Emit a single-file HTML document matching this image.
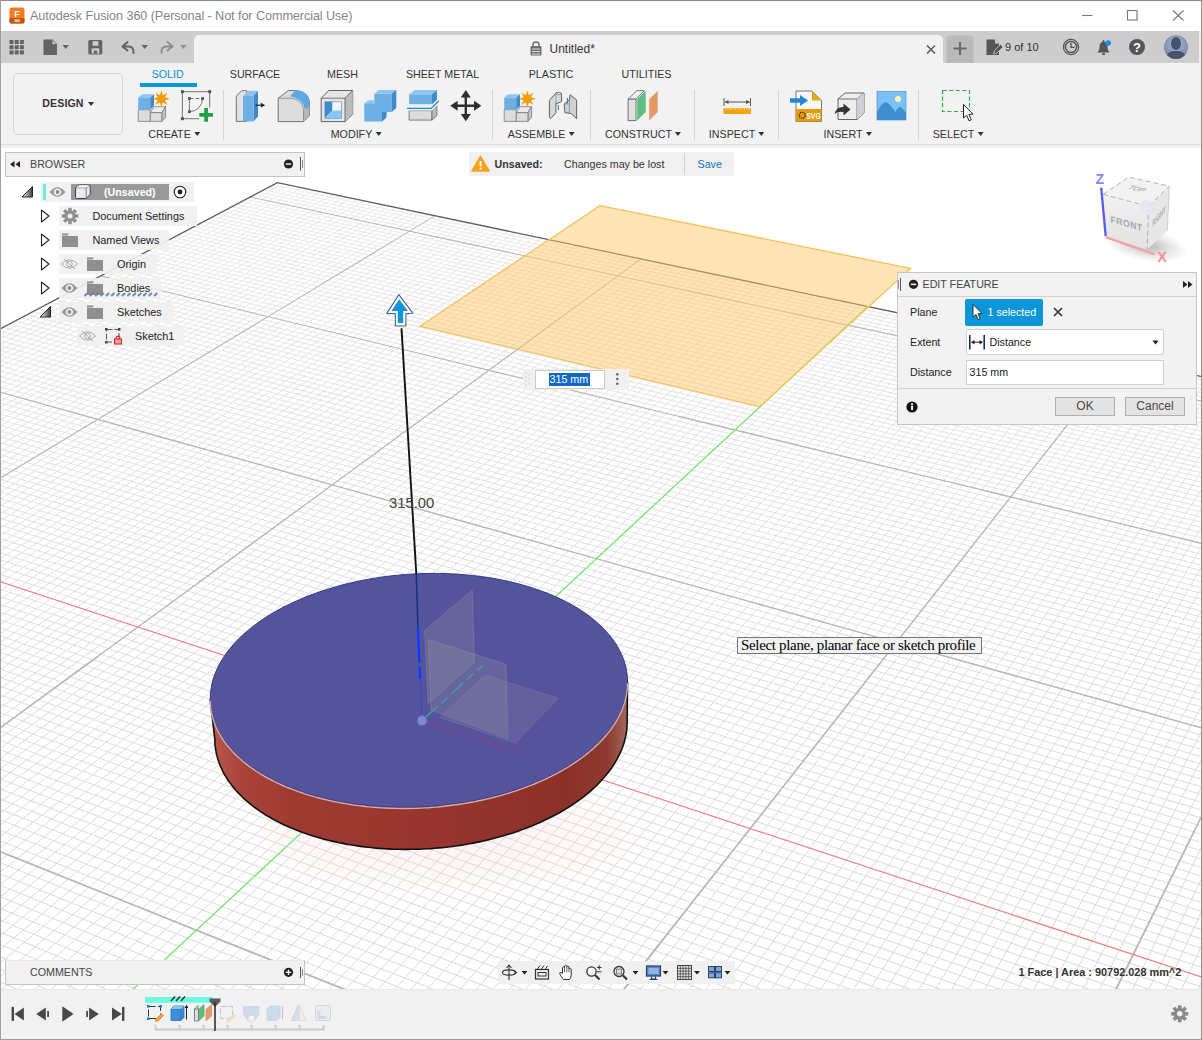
<!DOCTYPE html>
<html><head><meta charset="utf-8"><title>Autodesk Fusion 360</title>
<style>
*{box-sizing:border-box;margin:0;padding:0}
html,body{width:1202px;height:1040px;overflow:hidden;background:#fff}
body{font-family:"Liberation Sans",sans-serif;font-size:12px;color:#333;position:relative}
.abs{position:absolute}
#titlebar{left:0;top:0;width:1202px;height:31px;background:#fff;border-top:1px solid #8a8a8a}
#title{left:30px;top:8.6px;font-size:12.7px;color:#858585;letter-spacing:-0.1px;white-space:nowrap}
#qat{left:0;top:31px;width:1202px;height:32px;background:#cdcdcd;border-right:3px solid #f0f0f0}
#doctab{left:194px;top:35px;width:748.5px;height:28px;background:#f2f2f2;border-radius:5px 5px 0 0}
#ribbon{left:0;top:63px;width:1202px;height:85px;background:#f2f2f2}
.tab{position:absolute;top:67.5px;font-size:10.7px;color:#333;white-space:nowrap;transform:translateX(-50%)}
.glabel{position:absolute;top:127.5px;font-size:10.7px;color:#333;white-space:nowrap;transform:translateX(-50%)}
.glabel:after{content:"";display:inline-block;margin-left:3px;border:3.5px solid transparent;border-top:4px solid #333;border-bottom:0;vertical-align:2px}
.vsep{position:absolute;top:90px;width:1px;height:50px;background:#d4d4d4}
#canvas{left:0;top:148px;width:1202px;height:841px;background:#fff;overflow:hidden}
#bottombar{left:0;top:989px;width:1202px;height:51px;background:#f1f1f1;border-top:1px solid #e8e8e8}
.lb{left:0;top:0;width:1px;height:1040px;background:#a0a0a0}
.rb{left:1201px;top:0;width:1px;height:1040px;background:#909090}
.bb{left:0;top:1038.7px;width:1202px;height:1.3px;background:#9c9c9c}
.panelhdr{background:#f1f1f1;border:1px solid #c4c4c4;color:#444;font-size:12px}
.row{position:absolute;height:22px;background:rgba(240,240,240,.92);font-size:10.9px;color:#222;white-space:nowrap}
.row span{position:absolute;top:4px}
</style></head><body>
<div id="titlebar" class="abs"></div>
<div id="title" class="abs">Autodesk Fusion 360 (Personal - Not for Commercial Use)</div>
<svg class="abs" style="left:9px;top:7px" width="16" height="17" viewBox="0 0 16 17"><rect x="0.5" y="0.5" width="15" height="16" rx="2.5" fill="#f47c20"/><rect x="0.5" y="11" width="15" height="5.5" rx="1.5" fill="#c4520c"/><text x="8" y="9.5" font-family="Liberation Sans, sans-serif" font-weight="bold" font-size="9" fill="#fff" text-anchor="middle">F</text><text x="8" y="15.3" font-family="Liberation Sans, sans-serif" font-weight="bold" font-size="3.6" fill="#fff" text-anchor="middle">360</text></svg>
<svg class="abs" style="left:1075px;top:5px" width="120" height="22" viewBox="1075 5 120 22" fill="none" stroke="#777" stroke-width="1.1"><path d="M1082 15.5H1092.5"/><rect x="1127.5" y="10.5" width="9.5" height="9.5"/><path d="M1173 10.5L1183.5 20.5M1183.5 10.5L1173 20.5"/></svg>

<div id="qat" class="abs"></div>
<div id="doctab" class="abs"></div>
<svg class="abs" style="left:0;top:31px" width="1202" height="32" viewBox="0 31 1202 32">
<!-- grid icon -->
<g fill="#636363"><rect x="9.5" y="40" width="4" height="4"/><rect x="14.7" y="40" width="4" height="4"/><rect x="19.9" y="40" width="4" height="4"/><rect x="9.5" y="45.2" width="4" height="4"/><rect x="14.7" y="45.2" width="4" height="4"/><rect x="19.9" y="45.2" width="4" height="4"/><rect x="9.5" y="50.4" width="4" height="4"/><rect x="14.7" y="50.4" width="4" height="4"/><rect x="19.9" y="50.4" width="4" height="4"/></g>
<!-- file -->
<path d="M43.5 39.5H52L57 44.5V55H43.5Z" fill="#636363"/><path d="M52 39.5V44.5H57Z" fill="#cdcdcd" stroke="#636363" stroke-width=".8"/>
<path d="M62.5 45L69 45L65.7 49Z" fill="#636363"/>
<!-- save -->
<rect x="88.3" y="40" width="14" height="14.6" rx="1.6" fill="#636363"/><rect x="92.5" y="41.2" width="5.9" height="4.6" fill="#cdcdcd"/><rect x="91.6" y="48.3" width="7.7" height="5.2" fill="#cdcdcd"/><rect x="93.8" y="50.6" width="3.3" height="2.9" fill="#636363"/>
<!-- undo -->
<path d="M122.5 46.5L127.5 42M122.5 46.5L127.5 50.5M122.5 46.5H129Q134 46.8 133.5 53" fill="none" stroke="#636363" stroke-width="2" stroke-linecap="round" stroke-linejoin="round"/>
<path d="M141.5 45L148 45L144.7 49Z" fill="#636363"/>
<!-- redo -->
<path d="M172.5 46.5L167.5 42M172.5 46.5L167.5 50.5M172.5 46.5H166Q161 46.8 161.5 53" fill="none" stroke="#8e8e8e" stroke-width="1.8" stroke-linecap="round" stroke-linejoin="round"/>
<path d="M180 45L186.5 45L183.2 49Z" fill="#8e8e8e"/>
<!-- lock -->
<path d="M533 46V44.5Q533 42 536 42Q539 42 539 44.5V46" fill="none" stroke="#707070" stroke-width="1.5"/><rect x="530.5" y="46" width="11" height="9.5" rx="1" fill="#707070"/><path d="M532 49H540M532 51.5H540M532 54H540" stroke="#f2f2f2" stroke-width=".8"/>
<text x="549.5" y="53" font-family="Liberation Sans, sans-serif" font-size="12" fill="#333">Untitled*</text>
<path d="M927 45.5L935 53.5M935 45.5L927 53.5" stroke="#555" stroke-width="1.5"/>
<!-- plus -->
<path d="M946.5 63V39Q946.5 35.5 950 35.5H970Q973.5 35.5 973.5 39V63Z" fill="#bababa"/>
<path d="M953.5 48.5H966.5M960 42V55" stroke="#6a6a6a" stroke-width="2.2"/>
<!-- job status -->
<path d="M986.5 39.5H995L999 43.5V55H986.5Z" fill="#555"/><path d="M995 39.5V43.5H999Z" fill="#cdcdcd"/><path d="M993.5 54L994.5 50.5L1000.5 44.5L1003 47L997 53Z" fill="#555" stroke="#cdcdcd" stroke-width=".8"/>
<text x="1005" y="51" font-family="Liberation Sans, sans-serif" font-size="11" fill="#333">9 of 10</text>
<!-- clock -->
<circle cx="1071" cy="47" r="7.6" fill="none" stroke="#555" stroke-width="1.2"/><circle cx="1071" cy="47" r="5.6" fill="none" stroke="#555" stroke-width="1.5"/><path d="M1071 43V47.3H1074.5" fill="none" stroke="#555" stroke-width="1.3"/>
<!-- bell -->
<path d="M1097.5 52.5Q1099.5 51 1099.5 47Q1099.5 42 1103.5 41.5Q1107.5 42 1107.5 47Q1107.5 51 1109.5 52.5Z" fill="#555"/><rect x="1102.3" y="53.2" width="2.6" height="1.8" fill="#555"/><circle cx="1103.5" cy="41" r="1" fill="#555"/>
<circle cx="1108.2" cy="43" r="2.8" fill="#1a8fe3"/>
<!-- help -->
<circle cx="1137" cy="47" r="8" fill="#555"/><text x="1137" y="51.8" font-family="Liberation Sans, sans-serif" font-size="13" font-weight="bold" fill="#fff" text-anchor="middle">?</text>
<!-- avatar -->
<defs><radialGradient id="av" cx=".5" cy=".35" r=".7"><stop offset="0" stop-color="#a9b8cf"/><stop offset="1" stop-color="#6f84a6"/></radialGradient><clipPath id="avc"><circle cx="1176" cy="47" r="12"/></clipPath></defs>
<circle cx="1176" cy="47" r="12" fill="url(#av)"/>
<g clip-path="url(#avc)" fill="#46536b"><ellipse cx="1176" cy="43.5" rx="5" ry="6.5"/><path d="M1165 60Q1166 52 1173 51H1179Q1186 52 1187 60Z"/></g>
</svg>

<div id="ribbon" class="abs"></div>
<div class="abs" style="left:0;top:144px;width:1202px;height:1px;background:#e0e0e0"></div>
<div class="abs" style="left:13px;top:73px;width:110px;height:62px;border:1px solid #d6d6d6;border-radius:5px;background:#f3f3f3"></div>
<div class="abs" style="left:42.3px;top:97px;font-size:10.6px;font-weight:bold;color:#333;letter-spacing:.1px">DESIGN</div>
<div class="abs" style="left:88px;top:102px;border:3.5px solid transparent;border-top:4px solid #333;border-bottom:0"></div>
<div class="tab" style="left:167.7px;color:#0c8fd3">SOLID</div>
<div class="abs" style="left:139.5px;top:83.2px;width:57px;height:3.6px;background:#0c96d8"></div>
<div class="tab" style="left:255px">SURFACE</div>
<div class="tab" style="left:342.5px">MESH</div>
<div class="tab" style="left:442.5px">SHEET METAL</div>
<div class="tab" style="left:551px">PLASTIC</div>
<div class="tab" style="left:646.5px">UTILITIES</div>
<div class="glabel" style="left:174px">CREATE</div>
<div class="glabel" style="left:356px">MODIFY</div>
<div class="glabel" style="left:541px">ASSEMBLE</div>
<div class="glabel" style="left:643px">CONSTRUCT</div>
<div class="glabel" style="left:736.5px">INSPECT</div>
<div class="glabel" style="left:847.5px">INSERT</div>
<div class="glabel" style="left:958px">SELECT</div>
<div class="vsep" style="left:222.5px"></div><div class="vsep" style="left:491.5px"></div><div class="vsep" style="left:589.5px"></div><div class="vsep" style="left:694px"></div><div class="vsep" style="left:777.7px"></div><div class="vsep" style="left:918px"></div>
<svg class="abs" style="left:130px;top:86px" width="860" height="40" viewBox="130 86 860 40">
<defs>
<linearGradient id="gb" x1="0" y1="0" x2="0" y2="1"><stop offset="0" stop-color="#7fbbe9"/><stop offset="1" stop-color="#4a94d6"/></linearGradient>
<linearGradient id="gg" x1="0" y1="0" x2="0" y2="1"><stop offset="0" stop-color="#ececec"/><stop offset="1" stop-color="#cfcfcf"/></linearGradient>
</defs>
<!-- new component (CREATE) -->
<g id="newc" stroke-linejoin="round">
<path d="M150.2 112.7H161.9L165.6 106.7H154Z" fill="#ececec" stroke="#7a7a7a" stroke-width=".8"/>
<path d="M161.900 112.700L165.600 106.700V117.200L161.900 121.400Z" fill="#c4c4c4" stroke="#7a7a7a" stroke-width=".8"/>
<path d="M150.200 112.700H161.900V121.400H150.200Z" fill="#dedede" stroke="#7a7a7a" stroke-width=".8"/>
<path d="M138.200 109.700H150.200V121.400H138.200Z" fill="#dcdcdc" stroke="#7a7a7a" stroke-width=".8"/>
<path d="M138.200 97.700H150.200L154 94.300H142Z" fill="#8cc6f0"/>
<path d="M150.200 97.700L154 94.300V106L150.200 109.700Z" fill="#3f8acd"/>
<path d="M138.200 97.700H150.200V109.700H138.200Z" fill="#6cb0e6"/>
<path d="M161.4 90.3L162.9 95.200L167.400 92.800L165 97.300L169.900 98.800L165 100.300L167.400 104.800L162.900 102.400L161.400 107.300L159.900 102.400L155.400 104.800L157.800 100.300L152.900 98.800L157.800 97.300L155.400 92.800L159.900 95.200Z" fill="#f59b0a"/>
</g>
<!-- create sketch -->
<path d="M182.400 118.700V91.700H209.700V107.500M182.400 118.700H199" fill="none" stroke="#666" stroke-width=".9"/>
<g fill="#555"><rect x="180.900" y="90.200" width="3" height="3"/><rect x="208.200" y="90.200" width="3" height="3"/><rect x="180.900" y="117.200" width="3" height="3"/></g>
<path d="M189.400 98.500H202.600" stroke="#666" stroke-width=".9" stroke-dasharray="4 2"/>
<path d="M189.400 98.500V111.700" stroke="#666" stroke-width=".9"/>
<path d="M189.400 111.700A13.200 13.200 0 0 0 202.600 98.500" fill="none" stroke="#666" stroke-width=".9"/>
<g fill="#555"><rect x="188" y="97.100" width="2.800" height="2.800"/><rect x="201.200" y="97.100" width="2.800" height="2.800"/><rect x="188" y="110.300" width="2.800" height="2.800"/></g>
<path d="M199.300 113.050H204.250V108.100H207.950V113.050H212.900V116.750H207.950V121.700H204.250V116.750H199.300Z" fill="#1fa045"/>
<!-- press pull -->
<path d="M236.300 96.200L241.600 90.700H246.800V121.400H236.300Z" fill="#e2e2e2" stroke="#666" stroke-width=".9" stroke-linejoin="round"/>
<path d="M243 95.800H253.500L258 90.700H248.300Z" fill="#8cc6f0"/>
<path d="M253.500 95.800L258 90.700V116.400L253.500 121.400Z" fill="#3f8acd"/>
<path d="M243 95.800H253.500V121.400H243Z" fill="#6cb0e6"/>
<path d="M255.500 105.200H262" stroke="#222" stroke-width="1.2"/><path d="M260.800 102.800L265.200 105.200L260.800 107.600Z" fill="#222"/>
<!-- fillet -->
<path d="M278.200 98.200L288.300 90.500H295.600Q308 91.500 309.400 101.500V116.100L303.500 121.600H278.200Z" fill="#dcdcdc" stroke="#666" stroke-width=".9" stroke-linejoin="round"/>
<path d="M303.500 109.700L309.400 105.100V116.100L303.500 121.600Z" fill="#b5b5b5"/>
<path d="M295.600 90.100Q308.500 91.500 309.400 101.500V106.600L304.800 109.500Q303 98.500 290.100 96.300Z" fill="#5fa8e2"/>
<path d="M278.200 98.200H291Q302.500 99.500 303.500 109.700V121.600" fill="none" stroke="#777" stroke-width=".7"/>
<!-- shell -->
<path d="M321.200 98.200L328.900 90.500H352.700V114.300L345 121.600H321.200Z" fill="#e6e6e6" stroke="#555" stroke-width=".9" stroke-linejoin="round"/>
<path d="M345 98.200L352.700 90.500V114.300L345 121.600Z" fill="#bcbcbc"/>
<path d="M321.200 98.200H345V121.600M345 98.200L352.700 90.500" fill="none" stroke="#555" stroke-width=".8"/>
<rect x="324.900" y="101.800" width="16.500" height="16.500" fill="#f2f2f2"/>
<path d="M324.900 101.800H332.200V110.600L324.900 118.300Z" fill="#3f8acd"/>
<path d="M332.200 110.600H341.400V118.300H324.900Z" fill="#8cc6f0"/>
<rect x="324.900" y="101.800" width="16.500" height="16.500" fill="none" stroke="#4a8cc8" stroke-width=".6"/>
<!-- combine -->
<path d="M364.300 103.300H374.300V93.800H391.700V112.100H382V121.600H364.300Z" fill="#6cb0e6"/>
<path d="M374.300 93.800L378.900 90.100H396.300L391.700 93.800Z M364.300 103.300L368.800 100.200H374.300V103.300Z" fill="#8cc6f0"/>
<path d="M391.700 93.800L396.300 90.100V107.900L391.700 112.100Z M382 112.100H386.800L386.200 117.900L382 121.600Z" fill="#3f8acd"/>
<!-- offset face -->
<path d="M409.100 94.500L414.600 90.100H436.900L432 94.500Z" fill="#8cc6f0"/>
<path d="M432 94.500L436.900 90.100V100L432 104.200Z" fill="#3f8acd"/>
<path d="M409.100 94.500H432V104.200H409.100Z" fill="#6cb0e6"/>
<path d="M409.100 110.600H432V120.100H409.100Z" fill="#dcdcdc" stroke="#666" stroke-width=".8"/>
<path d="M432 110.600L436.900 105.500V115.700L432 120.100Z" fill="#bcbcbc" stroke="#666" stroke-width=".8" stroke-linejoin="round"/>
<path d="M406.900 108.400H431.100L438.800 101.100" fill="none" stroke="#f2f2f2" stroke-width="4"/>
<path d="M406.900 108.400H431.100L438.800 101.100" fill="none" stroke="#1f86da" stroke-width="1.4"/>
<!-- move -->
<path d="M465.800 90.100L470.800 97.500H467V104.500H474V100.700L481.400 105.700L474 110.700V106.900H467V113.900H470.800L465.800 121.300L460.800 113.900H464.600V106.900H457.600V110.700L450.200 105.700L457.600 100.700V104.500H464.600V97.500H460.800Z" fill="#2e2e2e"/>
<!-- assemble new component -->
<use href="#newc" x="366" y="0"/>
<!-- joint -->
<path d="M549.400 100.500L555 94Q556 92.300 558.800 92.300Q561.600 92.300 561.600 94.500V101.500L555.900 104V112.700L550.600 118.700L549.400 117.200Z" fill="#d6d6d6" stroke="#555" stroke-width=".9" stroke-linejoin="round"/>
<path d="M555.900 104V94.500Q558.500 92.800 561.600 94.500" fill="none" stroke="#777" stroke-width=".6"/>
<ellipse cx="558.800" cy="93.600" rx="2" ry="1" fill="#f4f4f4" stroke="#666" stroke-width=".5"/>
<path d="M564.100 104L569.400 100L570.100 94.700L576.600 100V118.700L570.900 113.500L564.900 112.700Z" fill="#d0d0d0" stroke="#555" stroke-width=".9" stroke-linejoin="round"/>
<path d="M564.100 104H569.400V113.200M569.400 100V104" fill="none" stroke="#777" stroke-width=".6"/>
<path d="M558.400 105V110M567.400 98V103.800" stroke="#1f86da" stroke-width="1.1"/>
<!-- construct -->
<path d="M628.100 99.200L636.700 90.700H644.200L636 99.200Z" fill="#f0f0f0" stroke="#555" stroke-width=".8" stroke-linejoin="round"/>
<path d="M628.100 99.200H636V120.600H628.100Z" fill="#e0e0e0" stroke="#555" stroke-width=".8" stroke-linejoin="round"/>
<path d="M637.200 99.200L645.700 90.700V112L637.200 120.600Z" fill="#5cc080"/>
<path d="M649.200 99.200L657.700 90.700V112L649.200 120.600Z" fill="#e59a66"/>
<!-- inspect -->
<rect x="723.5" y="108" width="27.5" height="6" fill="#f2a511"/>
<path d="M726 108V110M728.3 108V109.3M730.6 108V110M732.9 108V109.3M735.2 108V110M737.5 108V109.3M739.8 108V110M742.1 108V109.3M744.4 108V110M746.7 108V109.3M749 108V110" stroke="#fff" stroke-width=".6"/>
<path d="M724 98V106M750.5 98V106M725 102H749.5" stroke="#555" stroke-width="1"/><path d="M724.5 102L728.5 100V104ZM750 102L746 100V104Z" fill="#555"/>
<!-- insert svg -->
<path d="M796 91H812L821.5 100.5V121.5H796Z" fill="#f8f8f8" stroke="#666" stroke-width=".9"/>
<path d="M812 91L821.5 100.5H812Z" fill="#f2a511"/>
<rect x="796" y="109" width="25.5" height="12.5" fill="#e79c10"/>
<circle cx="802.3" cy="115.3" r="3" fill="none" stroke="#3b2a00" stroke-width="1.3" stroke-dasharray="1.4 .9"/>
<text x="806.3" y="119.3" font-family="Liberation Sans, sans-serif" font-size="8.6" font-weight="bold" fill="#fff" textLength="14.4" lengthAdjust="spacingAndGlyphs">SVG</text>
<path d="M790 98.3H800V95L808 100.5L800 106V102.7H790Z" fill="#1f86da"/>
<!-- insert derive -->
<path d="M838 99L845 93H864V113L857 119.5H838Z" fill="#ededed" stroke="#555" stroke-width=".9"/>
<path d="M838 99H857V119.5M857 99L864 93" fill="none" stroke="#555" stroke-width=".8"/>
<path d="M857 99L864 93V113L857 119.5Z" fill="#cfcfd4"/>
<path d="M834.5 114Q836.5 106.5 843.5 107V103.5L850.5 109.5L843.5 115.5V112Q838 111 834.5 114Z" fill="#333"/>
<!-- image -->
<rect x="877" y="91.5" width="29" height="28.5" fill="#7cc0f4" stroke="#3f86c6" stroke-width=".6"/>
<path d="M877 112Q884 98 889 104Q893 108 895.5 112Q899 105 902 108Q904 110 906 113V120H877Z" fill="#3f8ecf"/>
<circle cx="898" cy="99" r="3" fill="#fbf5b8"/>
<!-- select -->
<rect x="942.5" y="90.5" width="27" height="21" fill="none" stroke="#2fb14a" stroke-width="1.2" stroke-dasharray="4.2 2.4"/>
<path d="M963.5 104.5V118L966.7 115.2L969 120.8L971.2 119.8L968.9 114.4L973 114.2Z" fill="#fff" stroke="#222" stroke-width="1" stroke-linejoin="round"/>
</svg>

<div id="canvas" class="abs">
<svg id="scene" width="1202" height="841" viewBox="0 148 1202 841" style="display:block">
<defs>
<linearGradient id="sideg" x1="210" y1="0" x2="628" y2="0" gradientUnits="userSpaceOnUse">
<stop offset="0" stop-color="#bb5a4d"/><stop offset="0.07" stop-color="#a9443a"/><stop offset="0.2" stop-color="#9e3a32"/><stop offset="0.55" stop-color="#96352d"/><stop offset="0.85" stop-color="#8b3028"/><stop offset="0.95" stop-color="#8e3a31"/><stop offset="1" stop-color="#a0695d"/>
</linearGradient>
<radialGradient id="shad"><stop offset="0" stop-color="#f3bcbc" stop-opacity=".2"/><stop offset=".7" stop-color="#f6caca" stop-opacity=".13"/><stop offset="1" stop-color="#f8d8d8" stop-opacity="0"/></radialGradient>
</defs>
<path d="M-160.8 976.0 L-4.8 852.2 M-150.5 980.7 L5.2 856.2 M-140.1 985.3 L15.2 860.2 M-129.6 990.1 L25.3 864.3 M-119.0 994.8 L35.5 868.3 M-108.4 999.6 L45.7 872.4 M-97.8 1004.4 L56.0 876.5 M-87.1 1009.2 L66.3 880.7 M-76.3 1014.1 L76.7 884.8 M-65.4 1019.0 L87.1 889.0 M-54.5 1023.9 L97.6 893.2 M-43.6 1028.9 L108.1 897.4 M-32.5 1033.8 L118.7 901.6 M-21.4 1038.8 L129.4 905.9 M-10.3 1043.9 L140.1 910.2 M1.0 1048.9 L150.9 914.5 M12.2 1054.0 L161.7 918.8 M23.6 1059.2 L172.6 923.2 M35.0 1064.3 L183.5 927.6 M58.1 1074.7 L205.6 936.4 M69.7 1080.0 L216.8 940.9 M81.4 1085.2 L227.9 945.4 M93.2 1090.5 L239.2 949.9 M105.1 1095.9 L250.5 954.4 M117.0 1101.3 L261.9 958.9 M261.9 958.9 L385.6 837.5 M129.0 1106.7 L273.3 963.5 M273.3 963.5 L396.5 841.4 M141.0 1112.1 L284.9 968.1 M284.9 968.1 L407.5 845.4 M153.2 1117.6 L296.4 972.8 M296.4 972.8 L418.5 849.3 M165.4 1123.1 L308.1 977.4 M308.1 977.4 L429.6 853.3 M177.7 1128.6 L319.8 982.1 M319.8 982.1 L440.8 857.3 M190.0 1134.2 L331.5 986.8 M331.5 986.8 L452.0 861.4 M202.5 1139.8 L343.4 991.6 M343.4 991.6 L463.3 865.4 M355.3 996.3 L474.6 869.5 M367.3 1001.1 L486.0 873.6 M379.3 1005.9 L497.5 877.7 M391.4 1010.8 L509.0 881.8 M403.6 1015.7 L520.5 886.0 M415.9 1020.6 L532.2 890.2 M428.2 1025.5 L543.9 894.4 M440.6 1030.5 L555.6 898.6 M453.0 1035.4 L567.5 902.9 M465.6 1040.5 L579.4 907.2 M478.2 1045.5 L591.3 911.5 M490.9 1050.6 L603.3 915.8 M503.7 1055.7 L615.4 920.1 M516.5 1060.8 L627.6 924.5 M529.4 1066.0 L639.8 928.9 M542.4 1071.2 L652.1 933.3 M568.6 1081.7 L676.9 942.2 M581.9 1087.0 L689.3 946.7 M595.2 1092.3 L701.9 951.2 M608.6 1097.7 L714.5 955.8 M714.5 955.8 L805.0 834.6 M622.0 1103.1 L727.2 960.3 M727.2 960.3 L817.0 838.6 M635.6 1108.5 L740.0 964.9 M740.0 964.9 L829.1 842.5 M649.2 1114.0 L752.8 969.6 M752.8 969.6 L841.2 846.5 M662.9 1119.4 L765.8 974.2 M765.8 974.2 L853.4 850.4 M676.7 1125.0 L778.7 978.9 M778.7 978.9 L865.6 854.4 M690.6 1130.5 L791.8 983.6 M791.8 983.6 L877.9 858.5 M704.6 1136.1 L804.9 988.3 M804.9 988.3 L890.3 862.5 M718.7 1141.7 L818.2 993.0 M818.2 993.0 L902.8 866.6 M831.4 997.8 L915.3 870.7 M844.8 1002.6 L927.9 874.8 M858.2 1007.5 L940.5 878.9 M871.8 1012.3 L953.2 883.0 M885.4 1017.2 L966.0 887.2 M899.0 1022.1 L978.9 891.4 M912.8 1027.1 L991.8 895.6 M926.6 1032.0 L1004.8 899.9 M940.5 1037.1 L1017.8 904.1 M954.5 1042.1 L1031.0 908.4 M968.6 1047.2 L1044.2 912.7 M982.8 1052.2 L1057.5 917.1 M997.0 1057.4 L1070.8 921.4 M1011.3 1062.5 L1084.2 925.8 M1025.8 1067.7 L1097.7 930.2 M1040.3 1072.9 L1111.3 934.6 M1054.9 1078.2 L1124.9 939.1 M1084.3 1088.8 L1152.4 948.1 M1099.2 1094.1 L1166.3 952.6 M1166.3 952.6 L1223.7 831.8 M1114.1 1099.5 L1180.3 957.2 M1180.3 957.2 L1236.7 835.7 M1129.1 1104.9 L1194.3 961.7 M1194.3 961.7 L1249.9 839.6 M1144.3 1110.3 L1208.4 966.3 M1159.5 1115.8 L1222.6 971.0 M1174.8 1121.3 L1236.9 975.6 M1190.2 1126.8 L1251.2 980.3 M1205.7 1132.4 L1265.6 985.0 M-121.4 993.8 L72.3 1081.1 M-110.9 985.2 L82.4 1071.6 M-100.4 976.6 L92.3 1062.2 M-90.1 968.2 L102.2 1052.9 M-79.9 959.8 L111.9 1043.6 M-69.8 951.6 L121.5 1034.5 M-59.7 943.4 L131.0 1025.5 M-49.8 935.3 L140.5 1016.5 M-40.0 927.3 L149.8 1007.7 M-30.3 919.3 L159.0 998.9 M-20.6 911.4 L168.2 990.3 M168.2 990.3 L376.7 1077.3 M-11.1 903.6 L177.2 981.7 M177.2 981.7 L385.1 1067.8 M-1.7 895.9 L186.2 973.2 M186.2 973.2 L393.4 1058.4 M7.7 888.3 L195.1 964.8 M195.1 964.8 L401.7 1049.1 M17.0 880.7 L203.8 956.5 M203.8 956.5 L409.8 1039.9 M26.1 873.2 L212.5 948.2 M212.5 948.2 L417.9 1030.9 M44.2 858.4 L229.7 932.0 M229.7 932.0 L433.7 1012.9 M238.1 924.0 L441.5 1004.1 M246.5 916.1 L449.3 995.4 M254.7 908.2 L456.9 986.8 M456.9 986.8 L680.2 1073.5 M262.9 900.5 L464.5 978.2 M464.5 978.2 L686.9 1064.0 M271.0 892.8 L472.0 969.8 M472.0 969.8 L693.6 1054.7 M279.1 885.1 L479.4 961.4 M479.4 961.4 L700.3 1045.4 M287.0 877.6 L486.8 953.1 M486.8 953.1 L706.8 1036.3 M294.9 870.1 L494.0 944.9 M494.0 944.9 L713.3 1027.2 M302.7 862.7 L501.2 936.7 M501.2 936.7 L719.8 1018.2 M508.4 928.7 L726.1 1009.4 M515.4 920.7 L732.4 1000.6 M522.4 912.8 L738.6 991.9 M738.6 991.9 L977.5 1079.2 M529.3 905.0 L744.8 983.3 M744.8 983.3 L982.7 1069.7 M536.2 897.3 L750.9 974.8 M750.9 974.8 L987.8 1060.3 M543.0 889.6 L757.0 966.3 M757.0 966.3 L992.9 1051.0 M549.7 882.0 L762.9 958.0 M762.9 958.0 L998.0 1041.7 M556.4 874.5 L768.9 949.7 M768.9 949.7 L1003.0 1032.6 M563.0 867.0 L774.7 941.5 M774.7 941.5 L1007.9 1023.6 M569.5 859.7 L780.5 933.4 M780.5 933.4 L1012.8 1014.6 M786.3 925.4 L1017.6 1005.8 M792.0 917.5 L1022.4 997.0 M797.6 909.6 L1027.2 988.4 M1027.2 988.4 L1280.7 1075.4 M803.2 901.8 L1031.9 979.8 M1031.9 979.8 L1284.3 1065.9 M808.7 894.1 L1036.5 971.3 M1036.5 971.3 L1287.8 1056.5 M814.2 886.4 L1041.1 962.9 M1041.1 962.9 L1291.3 1047.2 M819.6 878.9 L1045.7 954.6 M1045.7 954.6 L1294.8 1038.0 M825.0 871.4 L1050.2 946.4 M1050.2 946.4 L1298.2 1029.0 M830.3 864.0 L1054.6 938.2 M1054.6 938.2 L1301.6 1020.0 M1063.4 922.1 L1308.3 1002.2 M1067.7 914.2 L1311.6 993.5 M1072.0 906.4 L1314.9 984.9 M1076.3 898.6 L1318.1 976.3 M1080.5 890.9 L1321.3 967.9 M1084.7 883.3 L1324.4 959.5 M1088.8 875.8 L1327.6 951.2 M1092.9 868.3 L1330.7 943.0 M1096.9 860.9 L1333.7 934.9" stroke="#dadada" stroke-width="1" fill="none"/>
<path d="M-102.0 813.3 L35.9 711.7 M-92.5 817.1 L45.0 715.0 M-83.0 820.9 L54.3 718.3 M-73.4 824.8 L63.5 721.6 M-63.7 828.6 L72.9 725.0 M-54.0 832.5 L82.2 728.4 M-44.3 836.4 L91.6 731.8 M-34.5 840.3 L101.1 735.1 M-24.7 844.3 L110.6 738.6 M-14.8 848.2 L120.1 742.0 M-4.8 852.2 L129.7 745.4 M5.2 856.2 L139.3 748.9 M15.2 860.2 L149.0 752.4 M25.3 864.3 L158.8 755.9 M35.5 868.3 L168.5 759.4 M45.7 872.4 L178.4 762.9 M56.0 876.5 L188.2 766.5 M66.3 880.7 L198.2 770.1 M76.7 884.8 L208.1 773.7 M87.1 889.0 L218.2 777.3 M97.6 893.2 L228.2 780.9 M108.1 897.4 L238.4 784.5 M118.7 901.6 L248.5 788.2 M129.4 905.9 L258.8 791.9 M140.1 910.2 L269.0 795.6 M150.9 914.5 L279.4 799.3 M161.7 918.8 L289.8 803.0 M172.6 923.2 L300.2 806.8 M183.5 927.6 L310.7 810.5 M310.7 810.5 L420.7 709.2 M205.6 936.4 L331.8 818.1 M331.8 818.1 L441.0 715.8 M216.8 940.9 L342.5 822.0 M342.5 822.0 L451.2 719.1 M227.9 945.4 L353.2 825.8 M353.2 825.8 L461.4 722.5 M239.2 949.9 L363.9 829.7 M363.9 829.7 L471.7 725.8 M250.5 954.4 L374.7 833.6 M374.7 833.6 L482.0 729.2 M385.6 837.5 L492.4 732.6 M396.5 841.4 L502.8 736.0 M407.5 845.4 L513.3 739.4 M418.5 849.3 L523.9 742.9 M429.6 853.3 L534.5 746.3 M440.8 857.3 L545.1 749.8 M452.0 861.4 L555.8 753.3 M463.3 865.4 L566.5 756.8 M474.6 869.5 L577.3 760.3 M486.0 873.6 L588.2 763.9 M497.5 877.7 L599.1 767.4 M509.0 881.8 L610.0 771.0 M520.5 886.0 L621.0 774.6 M532.2 890.2 L632.1 778.2 M543.9 894.4 L643.2 781.8 M555.6 898.6 L654.4 785.5 M567.5 902.9 L665.7 789.1 M579.4 907.2 L676.9 792.8 M591.3 911.5 L688.3 796.5 M603.3 915.8 L699.7 800.3 M615.4 920.1 L711.2 804.0 M627.6 924.5 L722.7 807.8 M639.8 928.9 L734.3 811.5 M734.3 811.5 L816.0 710.0 M652.1 933.3 L745.9 815.3 M745.9 815.3 L827.1 713.3 M676.9 942.2 L769.3 823.0 M769.3 823.0 L849.3 719.9 M689.3 946.7 L781.2 826.9 M781.2 826.9 L860.5 723.3 M701.9 951.2 L793.0 830.7 M793.0 830.7 L871.8 726.6 M805.0 834.6 L883.1 730.0 M817.0 838.6 L894.5 733.4 M829.1 842.5 L905.9 736.8 M841.2 846.5 L917.4 740.3 M853.4 850.4 L928.9 743.7 M865.6 854.4 L940.5 747.2 M877.9 858.5 L952.2 750.7 M890.3 862.5 L963.9 754.2 M902.8 866.6 L975.6 757.7 M915.3 870.7 L987.4 761.2 M927.9 874.8 L999.3 764.8 M940.5 878.9 L1011.3 768.3 M953.2 883.0 L1023.3 771.9 M966.0 887.2 L1035.3 775.5 M978.9 891.4 L1047.4 779.1 M991.8 895.6 L1059.6 782.8 M1004.8 899.9 L1071.9 786.4 M1017.8 904.1 L1084.2 790.1 M1031.0 908.4 L1096.5 793.8 M1044.2 912.7 L1108.9 797.5 M1057.5 917.1 L1121.4 801.3 M1070.8 921.4 L1134.0 805.0 M1084.2 925.8 L1146.6 808.8 M1146.6 808.8 L1200.6 707.5 M1097.7 930.2 L1159.3 812.6 M1159.3 812.6 L1212.5 710.8 M1111.3 934.6 L1172.0 816.4 M1172.0 816.4 L1224.6 714.1 M1124.9 939.1 L1184.8 820.2 M1184.8 820.2 L1236.6 717.4 M1152.4 948.1 L1210.6 827.9 M-172.7 825.6 L-1.7 895.9 M-163.0 818.6 L7.7 888.3 M-153.3 811.7 L17.0 880.7 M-143.8 804.8 L26.1 873.2 M-125.0 791.3 L44.2 858.4 M-115.7 784.6 L53.2 851.1 M53.2 851.1 L238.1 924.0 M-106.5 778.0 L62.0 843.9 M62.0 843.9 L246.5 916.1 M-97.3 771.4 L70.8 836.8 M70.8 836.8 L254.7 908.2 M-88.3 764.9 L79.4 829.7 M79.4 829.7 L262.9 900.5 M-79.3 758.5 L88.0 822.6 M88.0 822.6 L271.0 892.8 M-70.4 752.1 L96.6 815.7 M96.6 815.7 L279.1 885.1 M-61.6 745.8 L105.0 808.8 M105.0 808.8 L287.0 877.6 M-52.9 739.5 L113.4 801.9 M113.4 801.9 L294.9 870.1 M-44.2 733.3 L121.6 795.2 M121.6 795.2 L302.7 862.7 M129.9 788.5 L310.5 855.4 M310.5 855.4 L508.4 928.7 M138.0 781.8 L318.1 848.1 M318.1 848.1 L515.4 920.7 M146.1 775.2 L325.7 840.9 M325.7 840.9 L522.4 912.8 M154.1 768.7 L333.3 833.8 M333.3 833.8 L529.3 905.0 M162.0 762.2 L340.7 826.7 M340.7 826.7 L536.2 897.3 M169.9 755.8 L348.1 819.7 M348.1 819.7 L543.0 889.6 M177.6 749.4 L355.4 812.8 M355.4 812.8 L549.7 882.0 M185.4 743.1 L362.7 805.9 M362.7 805.9 L556.4 874.5 M193.0 736.9 L369.9 799.1 M369.9 799.1 L563.0 867.0 M200.6 730.7 L377.0 792.3 M377.0 792.3 L569.5 859.7 M384.0 785.6 L576.0 852.3 M576.0 852.3 L786.3 925.4 M391.0 779.0 L582.4 845.1 M582.4 845.1 L792.0 917.5 M398.0 772.4 L588.8 837.9 M588.8 837.9 L797.6 909.6 M404.8 765.9 L595.1 830.8 M595.1 830.8 L803.2 901.8 M411.7 759.5 L601.3 823.8 M601.3 823.8 L808.7 894.1 M418.4 753.1 L607.5 816.8 M607.5 816.8 L814.2 886.4 M425.1 746.7 L613.6 809.9 M613.6 809.9 L819.6 878.9 M431.7 740.4 L619.7 803.0 M619.7 803.0 L825.0 871.4 M438.3 734.2 L625.7 796.2 M625.7 796.2 L830.3 864.0 M637.6 782.8 L840.8 849.3 M840.8 849.3 L1063.4 922.1 M643.4 776.2 L846.0 842.1 M846.0 842.1 L1067.7 914.2 M649.2 769.7 L851.1 834.9 M851.1 834.9 L1072.0 906.4 M655.0 763.2 L856.2 827.9 M856.2 827.9 L1076.3 898.6 M660.7 756.7 L861.2 820.8 M861.2 820.8 L1080.5 890.9 M666.3 750.4 L866.2 813.9 M866.2 813.9 L1084.7 883.3 M671.9 744.0 L871.1 807.0 M871.1 807.0 L1088.8 875.8 M677.5 737.8 L876.0 800.2 M876.0 800.2 L1092.9 868.3 M683.0 731.6 L880.9 793.4 M880.9 793.4 L1096.9 860.9 M885.7 786.7 L1100.9 853.6 M1100.9 853.6 L1336.8 926.8 M890.4 780.0 L1104.9 846.3 M1104.9 846.3 L1339.8 918.9 M895.2 773.4 L1108.8 839.1 M1108.8 839.1 L1342.8 911.0 M899.8 766.9 L1112.7 832.0 M1112.7 832.0 L1345.7 903.2 M904.5 760.4 L1116.6 824.9 M1116.6 824.9 L1348.6 895.4 M909.1 754.0 L1120.4 817.9 M1120.4 817.9 L1351.5 887.8 M913.6 747.7 L1124.2 811.0 M1124.2 811.0 L1354.4 880.2 M918.2 741.4 L1128.0 804.1 M1128.0 804.1 L1357.2 872.7 M922.6 735.1 L1131.7 797.3 M1131.7 797.3 L1360.0 865.2 M927.1 728.9 L1135.4 790.5 M1135.4 790.5 L1362.8 857.8 M1139.1 783.9 L1365.6 850.5 M1142.7 777.2 L1368.3 843.3 M1146.3 770.7 L1371.0 836.1 M1149.8 764.2 L1373.7 829.0 M1153.4 757.7 L1376.3 822.0 M1156.9 751.3 L1379.0 815.0 M1160.3 745.0 L1381.6 808.1 M1163.8 738.7 L1384.2 801.2 M1167.2 732.4 L1386.7 794.4 M1170.6 726.3 L1389.3 787.7" stroke="#dcdcdc" stroke-width="1" fill="none"/>
<path d="M-27.2 689.0 L95.3 603.0 M-18.4 692.2 L103.9 605.8 M-9.4 695.4 L112.6 608.6 M-139.5 798.3 L-0.5 698.6 M-0.5 698.6 L121.3 611.4 M-130.2 802.0 L8.6 701.9 M8.6 701.9 L130.0 614.3 M-120.9 805.8 L17.6 705.1 M17.6 705.1 L138.7 617.1 M35.9 711.7 L156.4 622.9 M45.0 715.0 L165.2 625.8 M54.3 718.3 L174.2 628.7 M63.5 721.6 L183.1 631.6 M72.9 725.0 L192.1 634.5 M82.2 728.4 L201.1 637.5 M91.6 731.8 L210.2 640.5 M101.1 735.1 L219.3 643.4 M110.6 738.6 L228.5 646.4 M120.1 742.0 L237.7 649.4 M129.7 745.4 L246.9 652.4 M139.3 748.9 L256.2 655.5 M149.0 752.4 L265.5 658.5 M158.8 755.9 L274.9 661.6 M168.5 759.4 L284.3 664.6 M178.4 762.9 L293.8 667.7 M188.2 766.5 L303.3 670.8 M198.2 770.1 L312.8 674.0 M208.1 773.7 L322.4 677.1 M218.2 777.3 L332.0 680.2 M228.2 780.9 L341.7 683.4 M238.4 784.5 L351.4 686.6 M248.5 788.2 L361.2 689.7 M361.2 689.7 L459.8 603.5 M258.8 791.9 L371.0 692.9 M371.0 692.9 L469.2 606.3 M269.0 795.6 L380.8 696.2 M380.8 696.2 L478.7 609.2 M279.4 799.3 L390.7 699.4 M390.7 699.4 L488.2 612.0 M289.8 803.0 L400.7 702.6 M400.7 702.6 L497.7 614.9 M300.2 806.8 L410.7 705.9 M410.7 705.9 L507.3 617.7 M420.7 709.2 L517.0 620.6 M441.0 715.8 L536.3 626.4 M451.2 719.1 L546.1 629.3 M461.4 722.5 L555.9 632.2 M471.7 725.8 L565.7 635.2 M482.0 729.2 L575.6 638.1 M492.4 732.6 L585.6 641.1 M502.8 736.0 L595.5 644.1 M513.3 739.4 L605.6 647.1 M523.9 742.9 L615.6 650.1 M534.5 746.3 L625.7 653.1 M545.1 749.8 L635.9 656.2 M555.8 753.3 L646.1 659.2 M566.5 756.8 L656.4 662.3 M577.3 760.3 L666.7 665.3 M588.2 763.9 L677.0 668.4 M599.1 767.4 L687.4 671.5 M610.0 771.0 L697.9 674.7 M621.0 774.6 L708.4 677.8 M632.1 778.2 L718.9 681.0 M643.2 781.8 L729.5 684.1 M654.4 785.5 L740.1 687.3 M740.1 687.3 L815.2 601.3 M665.7 789.1 L750.8 690.5 M750.8 690.5 L825.4 604.1 M676.9 792.8 L761.6 693.7 M761.6 693.7 L835.6 606.9 M688.3 796.5 L772.3 696.9 M772.3 696.9 L845.9 609.8 M699.7 800.3 L783.2 700.2 M783.2 700.2 L856.2 612.6 M711.2 804.0 L794.1 703.4 M794.1 703.4 L866.6 615.5 M722.7 807.8 L805.0 706.7 M805.0 706.7 L877.0 618.3 M816.0 710.0 L887.5 621.2 M827.1 713.3 L898.0 624.1 M849.3 719.9 L919.1 629.9 M860.5 723.3 L929.8 632.9 M871.8 726.6 L940.5 635.8 M883.1 730.0 L951.2 638.8 M894.5 733.4 L962.0 641.8 M905.9 736.8 L972.9 644.7 M917.4 740.3 L983.8 647.7 M928.9 743.7 L994.7 650.8 M940.5 747.2 L1005.7 653.8 M952.2 750.7 L1016.8 656.8 M963.9 754.2 L1027.9 659.9 M975.6 757.7 L1039.0 663.0 M987.4 761.2 L1050.2 666.0 M999.3 764.8 L1061.5 669.1 M1011.3 768.3 L1072.8 672.3 M1023.3 771.9 L1084.1 675.4 M1035.3 775.5 L1095.5 678.5 M1047.4 779.1 L1107.0 681.7 M1059.6 782.8 L1118.5 684.9 M1118.5 684.9 L1170.0 599.1 M1071.9 786.4 L1130.0 688.0 M1130.0 688.0 L1181.0 601.9 M1084.2 790.1 L1141.7 691.2 M1141.7 691.2 L1192.0 604.7 M1096.5 793.8 L1153.3 694.5 M1153.3 694.5 L1203.1 607.5 M1108.9 797.5 L1165.1 697.7 M1165.1 697.7 L1214.2 610.3 M1121.4 801.3 L1176.9 700.9 M1176.9 700.9 L1225.3 613.2 M1134.0 805.0 L1188.7 704.2 M1188.7 704.2 L1236.5 616.1 M1200.6 707.5 L1247.8 618.9 M-35.6 727.1 L129.9 788.5 M-27.1 721.0 L138.0 781.8 M-18.7 715.0 L146.1 775.2 M-10.3 709.0 L154.1 768.7 M-153.1 648.5 L-2.0 703.0 M-2.0 703.0 L162.0 762.2 M-144.6 643.0 L6.2 697.1 M6.2 697.1 L169.9 755.8 M-136.2 637.6 L14.3 691.2 M14.3 691.2 L177.6 749.4 M-127.8 632.2 L22.4 685.4 M22.4 685.4 L185.4 743.1 M-119.5 626.9 L30.5 679.7 M30.5 679.7 L193.0 736.9 M-111.2 621.6 L38.4 674.0 M38.4 674.0 L200.6 730.7 M46.3 668.3 L208.1 724.5 M208.1 724.5 L384.0 785.6 M54.1 662.7 L215.6 718.4 M215.6 718.4 L391.0 779.0 M61.9 657.1 L223.0 712.4 M223.0 712.4 L398.0 772.4 M69.6 651.6 L230.3 706.4 M230.3 706.4 L404.8 765.9 M77.2 646.1 L237.6 700.4 M237.6 700.4 L411.7 759.5 M84.8 640.6 L244.8 694.6 M244.8 694.6 L418.4 753.1 M92.3 635.2 L251.9 688.7 M251.9 688.7 L425.1 746.7 M99.8 629.9 L259.0 682.9 M259.0 682.9 L431.7 740.4 M107.1 624.6 L266.0 677.2 M266.0 677.2 L438.3 734.2 M279.9 665.8 L451.3 721.9 M451.3 721.9 L637.6 782.8 M286.8 660.2 L457.7 715.8 M457.7 715.8 L643.4 776.2 M293.6 654.7 L464.1 709.8 M464.1 709.8 L649.2 769.7 M300.3 649.2 L470.4 703.8 M470.4 703.8 L655.0 763.2 M307.0 643.7 L476.6 697.9 M476.6 697.9 L660.7 756.7 M313.7 638.3 L482.8 692.0 M482.8 692.0 L666.3 750.4 M320.2 632.9 L488.9 686.2 M488.9 686.2 L671.9 744.0 M326.8 627.6 L495.0 680.4 M495.0 680.4 L677.5 737.8 M333.2 622.3 L501.1 674.7 M501.1 674.7 L683.0 731.6 M507.1 669.0 L688.5 725.4 M688.5 725.4 L885.7 786.7 M513.0 663.4 L693.9 719.3 M693.9 719.3 L890.4 780.0 M518.9 657.8 L699.2 713.2 M699.2 713.2 L895.2 773.4 M524.7 652.3 L704.5 707.2 M704.5 707.2 L899.8 766.9 M530.5 646.8 L709.8 701.3 M709.8 701.3 L904.5 760.4 M536.3 641.3 L715.0 695.4 M715.0 695.4 L909.1 754.0 M542.0 635.9 L720.2 689.5 M720.2 689.5 L913.6 747.7 M547.6 630.6 L725.4 683.7 M725.4 683.7 L918.2 741.4 M553.3 625.2 L730.5 677.9 M730.5 677.9 L922.6 735.1 M558.8 620.0 L735.5 672.2 M735.5 672.2 L927.1 728.9 M740.6 666.6 L931.5 722.8 M931.5 722.8 L1139.1 783.9 M745.5 661.0 L935.8 716.7 M935.8 716.7 L1142.7 777.2 M750.5 655.4 L940.2 710.6 M940.2 710.6 L1146.3 770.7 M755.4 649.9 L944.5 704.7 M944.5 704.7 L1149.8 764.2 M760.2 644.4 L948.7 698.7 M948.7 698.7 L1153.4 757.7 M765.0 639.0 L952.9 692.8 M952.9 692.8 L1156.9 751.3 M769.8 633.6 L957.1 687.0 M957.1 687.0 L1160.3 745.0 M774.5 628.2 L961.3 681.2 M961.3 681.2 L1163.8 738.7 M779.2 622.9 L965.4 675.5 M965.4 675.5 L1167.2 732.4 M783.9 617.6 L969.5 669.8 M969.5 669.8 L1170.6 726.3 M977.5 658.5 L1177.2 714.1 M1177.2 714.1 L1394.3 774.4 M981.5 653.0 L1180.5 708.1 M1180.5 708.1 L1396.7 767.9 M985.4 647.5 L1183.8 702.1 M1183.8 702.1 L1399.2 761.4 M989.3 642.0 L1187.0 696.2 M1187.0 696.2 L1401.6 755.0 M993.2 636.6 L1190.2 690.3 M1190.2 690.3 L1404.0 748.6 M997.1 631.2 L1193.4 684.5 M1193.4 684.5 L1406.4 742.3 M1000.9 625.9 L1196.6 678.7 M1196.6 678.7 L1408.8 736.0 M1004.7 620.6 L1199.7 673.0 M1199.7 673.0 L1411.1 729.8 M1008.5 615.3 L1202.8 667.3 M1202.8 667.3 L1413.4 723.6 M1205.9 661.7 L1415.8 717.5" stroke="#dedede" stroke-width="1" fill="none"/>
<path d="M-122.3 654.8 L3.1 572.8 M-113.9 657.8 L11.3 575.5 M-105.4 660.9 L19.6 578.2 M-96.9 664.0 L27.8 580.9 M-88.3 667.0 L36.1 583.6 M-79.7 670.1 L44.5 586.4 M44.5 586.4 L154.4 512.2 M-71.1 673.2 L52.9 589.1 M52.9 589.1 L162.5 514.7 M-62.4 676.4 L61.3 591.8 M61.3 591.8 L170.7 517.1 M-53.7 679.5 L69.8 594.6 M69.8 594.6 L178.8 519.6 M-44.9 682.7 L78.2 597.4 M78.2 597.4 L187.1 522.0 M-36.1 685.8 L86.8 600.2 M86.8 600.2 L195.3 524.5 M95.3 603.0 L203.6 527.0 M103.9 605.8 L211.9 529.4 M112.6 608.6 L220.3 531.9 M121.3 611.4 L228.7 534.4 M130.0 614.3 L237.1 537.0 M138.7 617.1 L245.6 539.5 M156.4 622.9 L262.6 544.6 M165.2 625.8 L271.2 547.1 M174.2 628.7 L279.8 549.7 M183.1 631.6 L288.4 552.3 M192.1 634.5 L297.1 554.9 M201.1 637.5 L305.8 557.5 M210.2 640.5 L314.6 560.1 M219.3 643.4 L323.4 562.7 M228.5 646.4 L332.2 565.4 M237.7 649.4 L341.1 568.0 M246.9 652.4 L350.0 570.7 M256.2 655.5 L358.9 573.4 M265.5 658.5 L367.9 576.0 M274.9 661.6 L376.9 578.7 M284.3 664.6 L386.0 581.4 M293.8 667.7 L395.0 584.2 M395.0 584.2 L484.7 510.2 M303.3 670.8 L404.2 586.9 M404.2 586.9 L493.4 512.6 M312.8 674.0 L413.4 589.6 M413.4 589.6 L502.3 515.1 M322.4 677.1 L422.6 592.4 M422.6 592.4 L511.1 517.5 M332.0 680.2 L431.8 595.2 M431.8 595.2 L520.0 520.0 M341.7 683.4 L441.1 597.9 M441.1 597.9 L529.0 522.4 M351.4 686.6 L450.5 600.7 M450.5 600.7 L537.9 524.9 M459.8 603.5 L546.9 527.4 M469.2 606.3 L556.0 529.9 M478.7 609.2 L565.1 532.4 M488.2 612.0 L574.2 534.9 M497.7 614.9 L583.4 537.4 M507.3 617.7 L592.6 540.0 M517.0 620.6 L601.8 542.5 M536.3 626.4 L620.4 547.6 M546.1 629.3 L629.7 550.2 M555.9 632.2 L639.1 552.8 M565.7 635.2 L648.5 555.4 M575.6 638.1 L658.0 558.0 M585.6 641.1 L667.5 560.6 M595.5 644.1 L677.1 563.2 M605.6 647.1 L686.7 565.9 M615.6 650.1 L696.3 568.5 M625.7 653.1 L706.0 571.2 M635.9 656.2 L715.7 573.9 M646.1 659.2 L725.5 576.6 M656.4 662.3 L735.3 579.3 M666.7 665.3 L745.1 582.0 M745.1 582.0 L814.5 508.2 M677.0 668.4 L755.0 584.7 M755.0 584.7 L823.9 510.6 M687.4 671.5 L764.9 587.4 M764.9 587.4 L833.4 513.1 M697.9 674.7 L774.9 590.2 M774.9 590.2 L843.0 515.5 M708.4 677.8 L784.9 592.9 M784.9 592.9 L852.5 517.9 M718.9 681.0 L794.9 595.7 M794.9 595.7 L862.2 520.4 M729.5 684.1 L805.0 598.5 M805.0 598.5 L871.8 522.9 M815.2 601.3 L881.5 525.3 M825.4 604.1 L891.2 527.8 M835.6 606.9 L901.0 530.3 M845.9 609.8 L910.8 532.8 M856.2 612.6 L920.7 535.3 M866.6 615.5 L930.6 537.9 M877.0 618.3 L940.5 540.4 M887.5 621.2 L950.5 543.0 M898.0 624.1 L960.5 545.5 M919.1 629.9 L980.6 550.7 M929.8 632.9 L990.8 553.3 M940.5 635.8 L1001.0 555.9 M951.2 638.8 L1011.2 558.5 M962.0 641.8 L1021.5 561.1 M972.9 644.7 L1031.8 563.7 M983.8 647.7 L1042.2 566.4 M994.7 650.8 L1052.6 569.0 M1005.7 653.8 L1063.0 571.7 M1016.8 656.8 L1073.5 574.4 M1027.9 659.9 L1084.1 577.1 M1039.0 663.0 L1094.6 579.8 M1050.2 666.0 L1105.3 582.5 M1105.3 582.5 L1154.0 508.6 M1061.5 669.1 L1116.0 585.2 M1116.0 585.2 L1164.2 511.0 M1072.8 672.3 L1126.7 588.0 M1126.7 588.0 L1174.4 513.5 M1084.1 675.4 L1137.5 590.7 M1137.5 590.7 L1184.6 515.9 M1095.5 678.5 L1148.3 593.5 M1148.3 593.5 L1194.9 518.4 M1107.0 681.7 L1159.1 596.3 M1159.1 596.3 L1205.2 520.8 M1170.0 599.1 L1215.6 523.3 M1181.0 601.9 L1226.0 525.8 M1192.0 604.7 L1236.5 528.3 M1203.1 607.5 L1247.0 530.8 M-103.0 616.4 L46.3 668.3 M-94.9 611.2 L54.1 662.7 M-86.9 606.0 L61.9 657.1 M-78.9 600.9 L69.6 651.6 M-71.0 595.8 L77.2 646.1 M-63.1 590.8 L84.8 640.6 M-55.3 585.8 L92.3 635.2 M-47.6 580.8 L99.8 629.9 M-39.9 575.9 L107.1 624.6 M-24.7 566.2 L121.8 614.1 M121.8 614.1 L279.9 665.8 M-17.2 561.4 L129.0 608.9 M129.0 608.9 L286.8 660.2 M-9.7 556.6 L136.1 603.8 M136.1 603.8 L293.6 654.7 M-2.3 551.9 L143.2 598.7 M143.2 598.7 L300.3 649.2 M5.0 547.2 L150.3 593.6 M150.3 593.6 L307.0 643.7 M12.3 542.5 L157.3 588.6 M157.3 588.6 L313.7 638.3 M19.5 537.9 L164.2 583.6 M164.2 583.6 L320.2 632.9 M26.7 533.3 L171.1 578.7 M171.1 578.7 L326.8 627.6 M33.8 528.7 L177.9 573.7 M177.9 573.7 L333.2 622.3 M184.7 568.9 L339.7 617.0 M339.7 617.0 L507.1 669.0 M191.5 564.0 L346.0 611.8 M346.0 611.8 L513.0 663.4 M198.1 559.2 L352.4 606.6 M352.4 606.6 L518.9 657.8 M204.8 554.5 L358.6 601.5 M358.6 601.5 L524.7 652.3 M211.3 549.8 L364.9 596.4 M364.9 596.4 L530.5 646.8 M217.9 545.1 L371.0 591.4 M371.0 591.4 L536.3 641.3 M224.4 540.4 L377.2 586.4 M377.2 586.4 L542.0 635.9 M230.8 535.8 L383.3 581.4 M383.3 581.4 L547.6 630.6 M237.2 531.2 L389.3 576.5 M389.3 576.5 L553.3 625.2 M243.5 526.7 L395.3 571.6 M395.3 571.6 L558.8 620.0 M401.2 566.7 L564.3 614.7 M564.3 614.7 L740.6 666.6 M407.1 561.9 L569.8 609.5 M569.8 609.5 L745.5 661.0 M413.0 557.1 L575.3 604.4 M575.3 604.4 L750.5 655.4 M418.8 552.4 L580.7 599.3 M580.7 599.3 L755.4 649.9 M424.6 547.7 L586.0 594.2 M586.0 594.2 L760.2 644.4 M430.3 543.0 L591.3 589.1 M591.3 589.1 L765.0 639.0 M436.0 538.3 L596.6 584.2 M596.6 584.2 L769.8 633.6 M441.6 533.7 L601.8 579.2 M601.8 579.2 L774.5 628.2 M447.2 529.2 L607.0 574.3 M607.0 574.3 L779.2 622.9 M452.7 524.6 L612.2 569.4 M612.2 569.4 L783.9 617.6 M622.3 559.7 L793.1 607.2 M793.1 607.2 L977.5 658.5 M627.4 555.0 L797.7 602.1 M797.7 602.1 L981.5 653.0 M632.4 550.2 L802.2 597.0 M802.2 597.0 L985.4 647.5 M637.3 545.5 L806.7 591.9 M806.7 591.9 L989.3 642.0 M642.2 540.9 L811.1 586.9 M811.1 586.9 L993.2 636.6 M647.1 536.3 L815.5 581.9 M815.5 581.9 L997.1 631.2 M652.0 531.7 L819.9 577.0 M819.9 577.0 L1000.9 625.9 M656.8 527.1 L824.2 572.1 M824.2 572.1 L1004.7 620.6 M661.6 522.6 L828.6 567.2 M828.6 567.2 L1008.5 615.3 M832.8 562.4 L1012.2 610.1 M1012.2 610.1 L1205.9 661.7 M837.1 557.6 L1015.9 605.0 M1015.9 605.0 L1208.9 656.1 M841.3 552.9 L1019.6 599.8 M1019.6 599.8 L1212.0 650.6 M845.5 548.1 L1023.2 594.8 M1023.2 594.8 L1215.0 645.1 M849.6 543.4 L1026.8 589.7 M1026.8 589.7 L1218.0 639.6 M853.7 538.8 L1030.4 584.7 M1030.4 584.7 L1220.9 634.2 M857.8 534.2 L1034.0 579.7 M1034.0 579.7 L1223.8 628.9 M861.9 529.6 L1037.5 574.8 M1037.5 574.8 L1226.8 623.5 M865.9 525.1 L1041.0 569.9 M1041.0 569.9 L1229.6 618.3 M1044.5 565.1 L1232.5 613.0 M1047.9 560.3 L1235.3 607.9 M1051.4 555.5 L1238.2 602.7 M1054.8 550.7 L1241.0 597.6 M1058.1 546.0 L1243.7 592.5 M1061.5 541.4 L1246.5 587.5 M1064.8 536.7 L1249.2 582.5 M1068.1 532.1 L1251.9 577.5 M1071.4 527.5 L1254.6 572.6 M1074.6 523.0 L1257.3 567.8" stroke="#e0e0e0" stroke-width="1" fill="none"/>
<path d="M-115.9 534.0 L-1.4 465.7 M-108.2 536.5 L6.1 467.9 M-92.7 541.6 L21.2 472.4 M-84.9 544.1 L28.8 474.7 M-77.0 546.7 L36.4 477.0 M-69.2 549.2 L44.0 479.3 M-61.3 551.8 L51.7 481.6 M-53.3 554.4 L59.4 483.9 M-45.4 557.0 L67.2 486.2 M-37.4 559.6 L74.9 488.5 M-29.3 562.2 L82.7 490.8 M-21.3 564.9 L90.6 493.2 M-13.2 567.5 L98.4 495.5 M98.4 495.5 L198.0 431.3 M-5.0 570.2 L106.3 497.9 M106.3 497.9 L205.7 433.4 M3.1 572.8 L114.3 500.2 M114.3 500.2 L213.4 435.5 M11.3 575.5 L122.2 502.6 M122.2 502.6 L221.1 437.6 M19.6 578.2 L130.2 505.0 M130.2 505.0 L228.9 439.8 M27.8 580.9 L138.2 507.4 M138.2 507.4 L236.6 441.9 M36.1 583.6 L146.3 509.8 M146.3 509.8 L244.4 444.0 M154.4 512.2 L252.3 446.2 M162.5 514.7 L260.1 448.4 M170.7 517.1 L268.0 450.5 M178.8 519.6 L276.0 452.7 M187.1 522.0 L283.9 454.9 M195.3 524.5 L291.9 457.1 M203.6 527.0 L299.9 459.3 M211.9 529.4 L308.0 461.6 M220.3 531.9 L316.1 463.8 M228.7 534.4 L324.2 466.0 M237.1 537.0 L332.3 468.3 M245.6 539.5 L340.5 470.5 M262.6 544.6 L357.0 475.0 M271.2 547.1 L365.3 477.3 M279.8 549.7 L373.6 479.6 M288.4 552.3 L381.9 481.9 M297.1 554.9 L390.3 484.2 M305.8 557.5 L398.7 486.5 M314.6 560.1 L407.1 488.9 M323.4 562.7 L415.6 491.2 M332.2 565.4 L424.1 493.5 M341.1 568.0 L432.7 495.9 M432.7 495.9 L514.4 431.5 M350.0 570.7 L441.2 498.3 M441.2 498.3 L522.7 433.7 M358.9 573.4 L449.9 500.6 M449.9 500.6 L531.0 435.8 M367.9 576.0 L458.5 503.0 M458.5 503.0 L539.3 437.9 M376.9 578.7 L467.2 505.4 M467.2 505.4 L547.7 440.0 M386.0 581.4 L475.9 507.8 M475.9 507.8 L556.1 442.2 M484.7 510.2 L564.5 444.3 M493.4 512.6 L573.0 446.5 M502.3 515.1 L581.5 448.7 M511.1 517.5 L590.0 450.9 M520.0 520.0 L598.6 453.0 M529.0 522.4 L607.2 455.2 M537.9 524.9 L615.8 457.4 M546.9 527.4 L624.4 459.7 M556.0 529.9 L633.1 461.9 M565.1 532.4 L641.9 464.1 M574.2 534.9 L650.6 466.3 M583.4 537.4 L659.4 468.6 M592.6 540.0 L668.3 470.9 M601.8 542.5 L677.1 473.1 M620.4 547.6 L695.0 477.7 M629.7 550.2 L704.0 480.0 M639.1 552.8 L713.0 482.3 M648.5 555.4 L722.0 484.6 M658.0 558.0 L731.1 486.9 M667.5 560.6 L740.2 489.2 M677.1 563.2 L749.4 491.6 M686.7 565.9 L758.6 493.9 M758.6 493.9 L822.7 429.7 M696.3 568.5 L767.8 496.3 M767.8 496.3 L831.6 431.8 M706.0 571.2 L777.1 498.7 M777.1 498.7 L840.4 433.9 M715.7 573.9 L786.4 501.0 M786.4 501.0 L849.4 436.1 M725.5 576.6 L795.7 503.4 M795.7 503.4 L858.3 438.2 M735.3 579.3 L805.1 505.8 M805.1 505.8 L867.3 440.3 M814.5 508.2 L876.3 442.5 M823.9 510.6 L885.4 444.6 M833.4 513.1 L894.5 446.8 M843.0 515.5 L903.6 449.0 M852.5 517.9 L912.8 451.2 M862.2 520.4 L922.0 453.4 M871.8 522.9 L931.2 455.6 M881.5 525.3 L940.5 457.8 M891.2 527.8 L949.8 460.0 M901.0 530.3 L959.1 462.2 M910.8 532.8 L968.5 464.4 M920.7 535.3 L977.9 466.7 M930.6 537.9 L987.4 468.9 M940.5 540.4 L996.9 471.2 M950.5 543.0 L1006.4 473.5 M960.5 545.5 L1016.0 475.7 M980.6 550.7 L1035.2 480.3 M990.8 553.3 L1044.9 482.6 M1001.0 555.9 L1054.6 485.0 M1011.2 558.5 L1064.4 487.3 M1021.5 561.1 L1074.2 489.6 M1031.8 563.7 L1084.0 492.0 M1084.0 492.0 L1130.6 427.9 M1042.2 566.4 L1093.9 494.3 M1093.9 494.3 L1140.1 430.0 M1052.6 569.0 L1103.8 496.7 M1103.8 496.7 L1149.5 432.1 M1063.0 571.7 L1113.8 499.0 M1113.8 499.0 L1159.0 434.2 M1073.5 574.4 L1123.8 501.4 M1123.8 501.4 L1168.6 436.3 M1084.1 577.1 L1133.8 503.8 M1133.8 503.8 L1178.1 438.5 M1094.6 579.8 L1143.9 506.2 M1143.9 506.2 L1187.8 440.6 M1154.0 508.6 L1197.4 442.8 M1164.2 511.0 L1207.1 444.9 M1174.4 513.5 L1216.8 447.1 M1184.6 515.9 L1226.6 449.3 M1194.9 518.4 L1236.4 451.5 M1205.2 520.8 L1246.2 453.7 M-137.6 508.4 L-2.3 551.9 M-130.0 504.0 L5.0 547.2 M-122.5 499.7 L12.3 542.5 M-115.1 495.3 L19.5 537.9 M-107.7 491.1 L26.7 533.3 M-100.3 486.8 L33.8 528.7 M-93.0 482.6 L40.9 524.2 M40.9 524.2 L184.7 568.9 M-85.7 478.4 L47.9 519.7 M47.9 519.7 L191.5 564.0 M-78.5 474.2 L54.9 515.2 M54.9 515.2 L198.1 559.2 M-71.4 470.1 L61.8 510.8 M61.8 510.8 L204.8 554.5 M-64.3 466.0 L68.7 506.4 M68.7 506.4 L211.3 549.8 M-57.2 461.9 L75.5 502.0 M75.5 502.0 L217.9 545.1 M-50.2 457.9 L82.2 497.7 M82.2 497.7 L224.4 540.4 M-43.3 453.8 L89.0 493.4 M89.0 493.4 L230.8 535.8 M-36.4 449.8 L95.6 489.1 M95.6 489.1 L237.2 531.2 M-29.5 445.9 L102.2 484.9 M102.2 484.9 L243.5 526.7 M108.8 480.7 L249.8 522.1 M249.8 522.1 L401.2 566.7 M115.4 476.5 L256.0 517.7 M256.0 517.7 L407.1 561.9 M121.8 472.3 L262.2 513.2 M262.2 513.2 L413.0 557.1 M128.3 468.2 L268.4 508.8 M268.4 508.8 L418.8 552.4 M134.7 464.1 L274.5 504.4 M274.5 504.4 L424.6 547.7 M141.0 460.0 L280.6 500.0 M280.6 500.0 L430.3 543.0 M147.3 456.0 L286.6 495.7 M286.6 495.7 L436.0 538.3 M153.6 452.0 L292.6 491.4 M292.6 491.4 L441.6 533.7 M159.8 448.0 L298.5 487.2 M298.5 487.2 L447.2 529.2 M166.0 444.0 L304.4 482.9 M304.4 482.9 L452.7 524.6 M316.0 474.6 L463.7 515.6 M463.7 515.6 L622.3 559.7 M321.8 470.4 L469.2 511.2 M469.2 511.2 L627.4 555.0 M327.5 466.3 L474.6 506.8 M474.6 506.8 L632.4 550.2 M333.2 462.2 L479.9 502.4 M479.9 502.4 L637.3 545.5 M338.9 458.2 L485.2 498.1 M485.2 498.1 L642.2 540.9 M344.5 454.1 L490.5 493.8 M490.5 493.8 L647.1 536.3 M350.1 450.1 L495.7 489.5 M495.7 489.5 L652.0 531.7 M355.6 446.2 L500.9 485.2 M500.9 485.2 L656.8 527.1 M361.1 442.2 L506.1 481.0 M506.1 481.0 L661.6 522.6 M511.2 476.8 L666.3 518.1 M666.3 518.1 L832.8 562.4 M516.3 472.7 L671.0 513.6 M671.0 513.6 L837.1 557.6 M521.4 468.5 L675.7 509.2 M675.7 509.2 L841.3 552.9 M526.4 464.4 L680.3 504.8 M680.3 504.8 L845.5 548.1 M531.4 460.3 L684.9 500.4 M684.9 500.4 L849.6 543.4 M536.3 456.3 L689.5 496.1 M689.5 496.1 L853.7 538.8 M541.3 452.3 L694.0 491.8 M694.0 491.8 L857.8 534.2 M546.1 448.3 L698.5 487.5 M698.5 487.5 L861.9 529.6 M551.0 444.3 L703.0 483.3 M703.0 483.3 L865.9 525.1 M707.4 479.1 L869.9 520.5 M869.9 520.5 L1044.5 565.1 M711.8 474.9 L873.9 516.1 M873.9 516.1 L1047.9 560.3 M716.2 470.8 L877.8 511.6 M877.8 511.6 L1051.4 555.5 M720.6 466.6 L881.7 507.2 M881.7 507.2 L1054.8 550.7 M724.9 462.5 L885.6 502.8 M885.6 502.8 L1058.1 546.0 M729.2 458.5 L889.5 498.5 M889.5 498.5 L1061.5 541.4 M733.4 454.4 L893.3 494.1 M893.3 494.1 L1064.8 536.7 M737.6 450.4 L897.1 489.8 M897.1 489.8 L1068.1 532.1 M741.8 446.5 L900.9 485.6 M900.9 485.6 L1071.4 527.5 M746.0 442.5 L904.6 481.4 M904.6 481.4 L1074.6 523.0 M908.3 477.2 L1077.8 518.5 M1077.8 518.5 L1259.9 562.9 M915.7 468.9 L1084.2 509.6 M1084.2 509.6 L1265.2 553.3 M919.3 464.7 L1087.4 505.2 M1087.4 505.2 L1267.8 548.6 M923.0 460.7 L1090.5 500.8 M1090.5 500.8 L1270.3 543.9 M926.5 456.6 L1093.6 496.5 M1093.6 496.5 L1272.9 539.3 M930.1 452.6 L1096.7 492.2 M1096.7 492.2 L1275.4 534.6 M933.6 448.6 L1099.8 487.9 M1099.8 487.9 L1277.9 530.0 M937.2 444.6 L1102.8 483.7 M1102.8 483.7 L1280.4 525.5 M940.7 440.7 L1105.8 479.4 M1105.8 479.4 L1282.9 521.0 M1108.8 475.2 L1285.3 516.5 M1111.8 471.1 L1287.8 512.0 M1114.8 467.0 L1290.2 507.6 M1117.7 462.9 L1292.6 503.2 M1120.6 458.8 L1295.0 498.8 M1123.5 454.8 L1297.3 494.5 M1126.4 450.7 L1299.7 490.2 M1129.3 446.8 L1302.0 486.0 M1132.1 442.8 L1304.3 481.7" stroke="#e2e2e2" stroke-width="1" fill="none"/>
<path d="M-103.4 435.2 L1.7 377.2 M-96.3 437.3 L8.6 379.1 M-89.1 439.5 L15.6 381.0 M-82.0 441.6 L22.6 382.9 M-74.8 443.7 L29.6 384.8 M-67.6 445.9 L36.6 386.8 M-60.3 448.1 L43.7 388.7 M-53.1 450.2 L50.7 390.7 M-45.8 452.4 L57.9 392.6 M-38.5 454.6 L65.0 394.6 M-31.1 456.8 L72.1 396.6 M-23.7 459.0 L79.3 398.6 M-16.3 461.2 L86.5 400.5 M-8.9 463.5 L93.8 402.5 M-1.4 465.7 L101.1 404.5 M6.1 467.9 L108.4 406.5 M21.2 472.4 L123.0 410.6 M28.8 474.7 L130.4 412.6 M36.4 477.0 L137.8 414.7 M44.0 479.3 L145.2 416.7 M51.7 481.6 L152.7 418.8 M152.7 418.8 L243.5 362.3 M59.4 483.9 L160.2 420.8 M160.2 420.8 L250.7 364.2 M67.2 486.2 L167.7 422.9 M167.7 422.9 L258.0 366.0 M74.9 488.5 L175.2 425.0 M175.2 425.0 L265.4 367.9 M82.7 490.8 L182.8 427.1 M182.8 427.1 L272.7 369.8 M90.6 493.2 L190.4 429.2 M190.4 429.2 L280.1 371.7 M198.0 431.3 L287.5 373.6 M205.7 433.4 L294.9 375.5 M213.4 435.5 L302.4 377.4 M221.1 437.6 L309.9 379.3 M228.9 439.8 L317.4 381.2 M236.6 441.9 L324.9 383.1 M244.4 444.0 L332.5 385.1 M252.3 446.2 L340.1 387.0 M260.1 448.4 L347.7 388.9 M268.0 450.5 L355.3 390.9 M276.0 452.7 L363.0 392.9 M283.9 454.9 L370.7 394.8 M291.9 457.1 L378.4 396.8 M299.9 459.3 L386.2 398.8 M308.0 461.6 L394.0 400.8 M316.1 463.8 L401.8 402.8 M324.2 466.0 L409.7 404.8 M332.3 468.3 L417.5 406.8 M340.5 470.5 L425.4 408.8 M357.0 475.0 L441.3 412.9 M365.3 477.3 L449.3 414.9 M373.6 479.6 L457.4 417.0 M457.4 417.0 L532.7 360.6 M381.9 481.9 L465.4 419.0 M465.4 419.0 L540.5 362.5 M390.3 484.2 L473.5 421.1 M473.5 421.1 L548.3 364.4 M398.7 486.5 L481.6 423.2 M481.6 423.2 L556.1 366.2 M407.1 488.9 L489.8 425.2 M489.8 425.2 L564.0 368.1 M415.6 491.2 L497.9 427.3 M497.9 427.3 L571.9 370.0 M424.1 493.5 L506.2 429.4 M506.2 429.4 L579.8 371.9 M514.4 431.5 L587.8 373.8 M522.7 433.7 L595.8 375.7 M531.0 435.8 L603.8 377.6 M539.3 437.9 L611.8 379.5 M547.7 440.0 L619.9 381.4 M556.1 442.2 L628.0 383.3 M564.5 444.3 L636.1 385.3 M573.0 446.5 L644.3 387.2 M581.5 448.7 L652.4 389.2 M590.0 450.9 L660.7 391.1 M598.6 453.0 L668.9 393.1 M607.2 455.2 L677.2 395.1 M615.8 457.4 L685.5 397.0 M624.4 459.7 L693.8 399.0 M633.1 461.9 L702.2 401.0 M641.9 464.1 L710.6 403.0 M650.6 466.3 L719.0 405.0 M659.4 468.6 L727.5 407.0 M668.3 470.9 L736.0 409.1 M677.1 473.1 L744.5 411.1 M695.0 477.7 L761.7 415.2 M761.7 415.2 L821.6 359.0 M704.0 480.0 L770.3 417.2 M770.3 417.2 L829.9 360.8 M713.0 482.3 L778.9 419.3 M778.9 419.3 L838.2 362.7 M722.0 484.6 L787.6 421.4 M787.6 421.4 L846.6 364.5 M731.1 486.9 L796.3 423.4 M796.3 423.4 L855.0 366.4 M740.2 489.2 L805.1 425.5 M805.1 425.5 L863.4 368.3 M749.4 491.6 L813.9 427.6 M813.9 427.6 L871.8 370.2 M822.7 429.7 L880.3 372.1 M831.6 431.8 L888.8 374.0 M840.4 433.9 L897.3 375.9 M849.4 436.1 L905.9 377.8 M858.3 438.2 L914.5 379.7 M867.3 440.3 L923.1 381.6 M876.3 442.5 L931.8 383.5 M885.4 444.6 L940.5 385.5 M894.5 446.8 L949.2 387.4 M903.6 449.0 L958.0 389.4 M912.8 451.2 L966.7 391.3 M922.0 453.4 L975.6 393.3 M931.2 455.6 L984.4 395.3 M940.5 457.8 L993.3 397.3 M949.8 460.0 L1002.2 399.2 M959.1 462.2 L1011.2 401.2 M968.5 464.4 L1020.2 403.2 M977.9 466.7 L1029.2 405.3 M987.4 468.9 L1038.2 407.3 M996.9 471.2 L1047.3 409.3 M1006.4 473.5 L1056.4 411.3 M1016.0 475.7 L1065.6 413.4 M1035.2 480.3 L1084.0 417.5 M1084.0 417.5 L1127.8 361.0 M1044.9 482.6 L1093.2 419.5 M1093.2 419.5 L1136.7 362.9 M1054.6 485.0 L1102.5 421.6 M1102.5 421.6 L1145.6 364.7 M1064.4 487.3 L1111.9 423.7 M1111.9 423.7 L1154.5 366.6 M1074.2 489.6 L1121.2 425.8 M1121.2 425.8 L1163.5 368.5 M1130.6 427.9 L1172.5 370.4 M1140.1 430.0 L1181.5 372.3 M1149.5 432.1 L1190.5 374.1 M1159.0 434.2 L1199.6 376.1 M1168.6 436.3 L1208.8 378.0 M1178.1 438.5 L1217.9 379.9 M1187.8 440.6 L1227.1 381.8 M1197.4 442.8 L1236.3 383.7 M-22.7 441.9 L108.8 480.7 M-16.0 438.0 L115.4 476.5 M-9.2 434.1 L121.8 472.3 M-125.0 394.8 L-2.6 430.3 M-2.6 430.3 L128.3 468.2 M-118.2 391.2 L4.0 426.5 M4.0 426.5 L134.7 464.1 M-111.5 387.6 L10.6 422.7 M10.6 422.7 L141.0 460.0 M-104.7 384.1 L17.2 418.9 M17.2 418.9 L147.3 456.0 M-98.1 380.6 L23.7 415.1 M23.7 415.1 L153.6 452.0 M-91.4 377.1 L30.1 411.4 M30.1 411.4 L159.8 448.0 M-84.8 373.6 L36.5 407.7 M36.5 407.7 L166.0 444.0 M49.2 400.3 L178.2 436.2 M178.2 436.2 L316.0 474.6 M55.5 396.7 L184.2 432.3 M184.2 432.3 L321.8 470.4 M61.7 393.1 L190.2 428.5 M190.2 428.5 L327.5 466.3 M67.9 389.5 L196.2 424.7 M196.2 424.7 L333.2 462.2 M74.1 386.0 L202.1 420.9 M202.1 420.9 L338.9 458.2 M80.2 382.4 L208.0 417.1 M208.0 417.1 L344.5 454.1 M86.3 378.9 L213.9 413.4 M213.9 413.4 L350.1 450.1 M92.3 375.4 L219.7 409.6 M219.7 409.6 L355.6 446.2 M98.3 372.0 L225.4 406.0 M225.4 406.0 L361.1 442.2 M231.2 402.3 L366.5 438.3 M366.5 438.3 L511.2 476.8 M236.9 398.6 L371.9 434.4 M371.9 434.4 L516.3 472.7 M242.5 395.0 L377.3 430.6 M377.3 430.6 L521.4 468.5 M248.1 391.4 L382.7 426.7 M382.7 426.7 L526.4 464.4 M253.7 387.8 L388.0 422.9 M388.0 422.9 L531.4 460.3 M259.2 384.3 L393.3 419.1 M393.3 419.1 L536.3 456.3 M264.8 380.8 L398.5 415.4 M398.5 415.4 L541.3 452.3 M270.2 377.3 L403.7 411.6 M403.7 411.6 L546.1 448.3 M275.7 373.8 L408.9 407.9 M408.9 407.9 L551.0 444.3 M414.0 404.2 L555.8 440.4 M555.8 440.4 L707.4 479.1 M419.1 400.6 L560.6 436.5 M560.6 436.5 L711.8 474.9 M424.2 396.9 L565.3 432.6 M565.3 432.6 L716.2 470.8 M429.2 393.3 L570.1 428.8 M570.1 428.8 L720.6 466.6 M434.2 389.7 L574.7 424.9 M574.7 424.9 L724.9 462.5 M439.1 386.2 L579.4 421.1 M579.4 421.1 L729.2 458.5 M444.1 382.6 L584.0 417.4 M584.0 417.4 L733.4 454.4 M449.0 379.1 L588.6 413.6 M588.6 413.6 L737.6 450.4 M453.9 375.6 L593.2 409.9 M593.2 409.9 L741.8 446.5 M458.7 372.1 L597.7 406.2 M597.7 406.2 L746.0 442.5 M602.2 402.5 L750.2 438.6 M750.2 438.6 L908.3 477.2 M611.1 395.2 L758.3 430.8 M758.3 430.8 L915.7 468.9 M615.5 391.6 L762.4 427.0 M762.4 427.0 L919.3 464.7 M619.9 388.0 L766.4 423.2 M766.4 423.2 L923.0 460.7 M624.2 384.5 L770.4 419.4 M770.4 419.4 L926.5 456.6 M628.6 380.9 L774.4 415.6 M774.4 415.6 L930.1 452.6 M632.9 377.4 L778.4 411.9 M778.4 411.9 L933.6 448.6 M637.1 373.9 L782.3 408.1 M782.3 408.1 L937.2 444.6 M641.4 370.5 L786.2 404.4 M786.2 404.4 L940.7 440.7 M790.0 400.8 L944.1 436.8 M944.1 436.8 L1108.8 475.2 M793.9 397.1 L947.6 432.9 M947.6 432.9 L1111.8 471.1 M797.7 393.5 L951.0 429.0 M951.0 429.0 L1114.8 467.0 M801.5 389.9 L954.4 425.2 M954.4 425.2 L1117.7 462.9 M805.3 386.3 L957.8 421.4 M957.8 421.4 L1120.6 458.8 M809.0 382.8 L961.1 417.6 M961.1 417.6 L1123.5 454.8 M812.7 379.3 L964.4 413.8 M964.4 413.8 L1126.4 450.7 M816.4 375.8 L967.7 410.1 M967.7 410.1 L1129.3 446.8 M820.1 372.3 L971.0 406.4 M971.0 406.4 L1132.1 442.8 M974.3 402.7 L1134.9 438.9 M1134.9 438.9 L1306.6 477.5 M977.5 399.1 L1137.7 435.0 M1137.7 435.0 L1308.9 473.3 M980.7 395.4 L1140.5 431.1 M1140.5 431.1 L1311.2 469.2 M983.9 391.8 L1143.2 427.2 M1143.2 427.2 L1313.5 465.1 M987.1 388.2 L1146.0 423.4 M1146.0 423.4 L1315.7 461.0 M990.3 384.7 L1148.7 419.6 M1148.7 419.6 L1317.9 456.9 M993.4 381.1 L1151.4 415.8 M1151.4 415.8 L1320.1 452.9 M996.5 377.6 L1154.1 412.1 M1154.1 412.1 L1322.3 448.9 M999.6 374.1 L1156.8 408.4 M1156.8 408.4 L1324.5 444.9 M1002.7 370.6 L1159.4 404.7 M1159.4 404.7 L1326.6 441.0 M1162.0 401.0 L1328.8 437.0 M1164.7 397.3 L1330.9 433.2 M1169.8 390.1 L1335.1 425.4 M1172.4 386.5 L1337.2 421.6 M1175.0 383.0 L1339.3 417.8 M1177.5 379.5 L1341.4 414.1 M1180.0 375.9 L1343.4 410.3" stroke="#e4e4e4" stroke-width="1" fill="none"/>
<path d="M-52.8 362.1 L43.3 311.2 M-46.1 364.0 L49.9 312.9 M-39.4 365.9 L56.5 314.5 M-32.6 367.7 L63.1 316.2 M-25.8 369.6 L69.8 317.9 M-18.9 371.5 L76.4 319.6 M-12.1 373.4 L83.1 321.3 M-5.2 375.3 L89.8 323.1 M1.7 377.2 L96.6 324.8 M8.6 379.1 L103.3 326.5 M15.6 381.0 L110.1 328.2 M22.6 382.9 L116.9 330.0 M29.6 384.8 L123.7 331.7 M36.6 386.8 L130.6 333.5 M43.7 388.7 L137.4 335.2 M50.7 390.7 L144.3 337.0 M57.9 392.6 L151.3 338.8 M65.0 394.6 L158.2 340.5 M72.1 396.6 L165.2 342.3 M79.3 398.6 L172.2 344.1 M86.5 400.5 L179.2 345.9 M93.8 402.5 L186.2 347.7 M101.1 404.5 L193.3 349.5 M193.3 349.5 L276.8 299.7 M108.4 406.5 L200.4 351.3 M200.4 351.3 L283.7 301.3 M123.0 410.6 L214.6 354.9 M214.6 354.9 L297.5 304.6 M130.4 412.6 L221.8 356.8 M221.8 356.8 L304.5 306.3 M137.8 414.7 L229.0 358.6 M229.0 358.6 L311.5 307.9 M145.2 416.7 L236.2 360.5 M236.2 360.5 L318.5 309.6 M243.5 362.3 L325.5 311.3 M250.7 364.2 L332.6 313.0 M258.0 366.0 L339.7 314.7 M265.4 367.9 L346.8 316.4 M272.7 369.8 L353.9 318.1 M280.1 371.7 L361.1 319.8 M287.5 373.6 L368.2 321.5 M294.9 375.5 L375.4 323.2 M302.4 377.4 L382.7 324.9 M309.9 379.3 L389.9 326.6 M317.4 381.2 L397.2 328.4 M324.9 383.1 L404.5 330.1 M332.5 385.1 L411.9 331.9 M340.1 387.0 L419.2 333.6 M347.7 388.9 L426.6 335.4 M355.3 390.9 L434.0 337.1 M363.0 392.9 L441.4 338.9 M370.7 394.8 L448.9 340.7 M378.4 396.8 L456.4 342.5 M386.2 398.8 L463.9 344.2 M394.0 400.8 L471.4 346.0 M401.8 402.8 L479.0 347.8 M479.0 347.8 L548.9 298.1 M409.7 404.8 L486.6 349.7 M486.6 349.7 L556.2 299.8 M417.5 406.8 L494.2 351.5 M494.2 351.5 L563.6 301.4 M425.4 408.8 L501.9 353.3 M501.9 353.3 L571.0 303.1 M441.3 412.9 L517.2 357.0 M517.2 357.0 L585.8 306.4 M449.3 414.9 L525.0 358.8 M525.0 358.8 L593.3 308.1 M532.7 360.6 L600.8 309.7 M540.5 362.5 L608.3 311.4 M548.3 364.4 L615.9 313.1 M556.1 366.2 L623.5 314.8 M564.0 368.1 L631.1 316.5 M571.9 370.0 L638.7 318.2 M579.8 371.9 L646.3 319.9 M587.8 373.8 L654.0 321.6 M595.8 375.7 L661.7 323.3 M603.8 377.6 L669.5 325.0 M611.8 379.5 L677.2 326.8 M619.9 381.4 L685.0 328.5 M628.0 383.3 L692.8 330.2 M636.1 385.3 L700.7 332.0 M644.3 387.2 L708.5 333.7 M652.4 389.2 L716.4 335.5 M660.7 391.1 L724.3 337.3 M668.9 393.1 L732.3 339.0 M677.2 395.1 L740.3 340.8 M685.5 397.0 L748.3 342.6 M693.8 399.0 L756.3 344.4 M702.2 401.0 L764.4 346.2 M710.6 403.0 L772.5 348.0 M772.5 348.0 L828.5 298.2 M719.0 405.0 L780.6 349.8 M780.6 349.8 L836.3 299.9 M727.5 407.0 L788.7 351.6 M788.7 351.6 L844.1 301.5 M736.0 409.1 L796.9 353.5 M796.9 353.5 L852.0 303.2 M744.5 411.1 L805.1 355.3 M805.1 355.3 L859.9 304.8 M821.6 359.0 L875.8 308.2 M829.9 360.8 L883.8 309.8 M838.2 362.7 L891.8 311.5 M846.6 364.5 L899.9 313.2 M855.0 366.4 L907.9 314.9 M863.4 368.3 L916.0 316.6 M871.8 370.2 L924.1 318.3 M880.3 372.1 L932.3 320.0 M888.8 374.0 L940.5 321.7 M897.3 375.9 L948.7 323.4 M905.9 377.8 L956.9 325.2 M914.5 379.7 L965.2 326.9 M923.1 381.6 L973.5 328.6 M931.8 383.5 L981.8 330.4 M940.5 385.5 L990.1 332.1 M949.2 387.4 L998.5 333.9 M958.0 389.4 L1006.9 335.7 M966.7 391.3 L1015.4 337.4 M975.6 393.3 L1023.8 339.2 M984.4 395.3 L1032.3 341.0 M993.3 397.3 L1040.9 342.8 M1002.2 399.2 L1049.4 344.6 M1011.2 401.2 L1058.0 346.4 M1020.2 403.2 L1066.6 348.2 M1029.2 405.3 L1075.3 350.0 M1038.2 407.3 L1084.0 351.8 M1047.3 409.3 L1092.7 353.6 M1056.4 411.3 L1101.4 355.5 M1065.6 413.4 L1110.2 357.3 M-71.7 366.7 L49.2 400.3 M-65.3 363.3 L55.5 396.7 M-58.8 359.9 L61.7 393.1 M-52.5 356.5 L67.9 389.5 M-46.1 353.2 L74.1 386.0 M-39.8 349.9 L80.2 382.4 M-33.5 346.6 L86.3 378.9 M-27.3 343.3 L92.3 375.4 M-21.1 340.0 L98.3 372.0 M-15.0 336.8 L104.3 368.5 M104.3 368.5 L231.2 402.3 M-8.9 333.6 L110.2 365.1 M110.2 365.1 L236.9 398.6 M-2.8 330.4 L116.1 361.7 M116.1 361.7 L242.5 395.0 M3.3 327.2 L121.9 358.3 M121.9 358.3 L248.1 391.4 M9.3 324.0 L127.7 354.9 M127.7 354.9 L253.7 387.8 M15.2 320.9 L133.5 351.6 M133.5 351.6 L259.2 384.3 M21.2 317.7 L139.2 348.3 M139.2 348.3 L264.8 380.8 M27.0 314.6 L144.9 345.0 M144.9 345.0 L270.2 377.3 M32.9 311.6 L150.6 341.7 M150.6 341.7 L275.7 373.8 M156.2 338.5 L281.1 370.3 M281.1 370.3 L414.0 404.2 M161.8 335.2 L286.4 366.9 M286.4 366.9 L419.1 400.6 M167.4 332.0 L291.8 363.5 M291.8 363.5 L424.2 396.9 M172.9 328.8 L297.1 360.1 M297.1 360.1 L429.2 393.3 M178.4 325.6 L302.3 356.7 M302.3 356.7 L434.2 389.7 M183.8 322.5 L307.6 353.3 M307.6 353.3 L439.1 386.2 M189.3 319.3 L312.8 350.0 M312.8 350.0 L444.1 382.6 M194.6 316.2 L317.9 346.7 M317.9 346.7 L449.0 379.1 M200.0 313.1 L323.0 343.4 M323.0 343.4 L453.9 375.6 M205.3 310.1 L328.1 340.1 M328.1 340.1 L458.7 372.1 M333.2 336.9 L463.5 368.7 M463.5 368.7 L602.2 402.5 M343.3 330.5 L473.0 361.8 M473.0 361.8 L611.1 395.2 M348.2 327.3 L477.7 358.4 M477.7 358.4 L615.5 391.6 M353.2 324.1 L482.4 355.1 M482.4 355.1 L619.9 388.0 M358.1 321.0 L487.1 351.7 M487.1 351.7 L624.2 384.5 M363.0 317.8 L491.7 348.4 M491.7 348.4 L628.6 380.9 M367.8 314.7 L496.3 345.1 M496.3 345.1 L632.9 377.4 M372.7 311.6 L500.9 341.8 M500.9 341.8 L637.1 373.9 M377.4 308.6 L505.4 338.6 M505.4 338.6 L641.4 370.5 M509.9 335.3 L645.6 367.0 M645.6 367.0 L790.0 400.8 M514.4 332.1 L649.8 363.6 M649.8 363.6 L793.9 397.1 M518.8 328.9 L653.9 360.2 M653.9 360.2 L797.7 393.5 M523.3 325.7 L658.1 356.8 M658.1 356.8 L801.5 389.9 M527.7 322.6 L662.2 353.5 M662.2 353.5 L805.3 386.3 M532.0 319.4 L666.3 350.1 M666.3 350.1 L809.0 382.8 M536.4 316.3 L670.3 346.8 M670.3 346.8 L812.7 379.3 M540.7 313.2 L674.3 343.5 M674.3 343.5 L816.4 375.8 M545.0 310.1 L678.4 340.3 M678.4 340.3 L820.1 372.3 M682.3 337.0 L823.7 368.8 M823.7 368.8 L974.3 402.7 M686.3 333.8 L827.4 365.4 M827.4 365.4 L977.5 399.1 M690.2 330.6 L831.0 362.0 M831.0 362.0 L980.7 395.4 M694.1 327.4 L834.5 358.6 M834.5 358.6 L983.9 391.8 M698.0 324.2 L838.1 355.2 M838.1 355.2 L987.1 388.2 M701.9 321.1 L841.6 351.9 M841.6 351.9 L990.3 384.7 M705.7 317.9 L845.1 348.6 M845.1 348.6 L993.4 381.1 M709.5 314.8 L848.6 345.2 M848.6 345.2 L996.5 377.6 M713.3 311.7 L852.1 342.0 M852.1 342.0 L999.6 374.1 M717.1 308.6 L855.5 338.7 M855.5 338.7 L1002.7 370.6 M859.0 335.5 L1005.8 367.2 M1005.8 367.2 L1162.0 401.0 M862.4 332.2 L1008.8 363.8 M1008.8 363.8 L1164.7 397.3 M869.1 325.8 L1014.8 357.0 M1014.8 357.0 L1169.8 390.1 M872.4 322.7 L1017.8 353.6 M1017.8 353.6 L1172.4 386.5 M875.7 319.5 L1020.7 350.3 M1020.7 350.3 L1175.0 383.0 M879.0 316.4 L1023.7 347.0 M1023.7 347.0 L1177.5 379.5 M882.3 313.3 L1026.6 343.7 M1026.6 343.7 L1180.0 375.9" stroke="#e6e6e6" stroke-width="1" fill="none"/>
<path d="M43.3 311.2 L130.7 264.9 M49.9 312.9 L137.1 266.4 M56.5 314.5 L143.6 267.9 M63.1 316.2 L150.0 269.5 M69.8 317.9 L156.5 271.0 M76.4 319.6 L163.0 272.6 M83.1 321.3 L169.5 274.1 M89.8 323.1 L176.0 275.7 M96.6 324.8 L182.6 277.2 M103.3 326.5 L189.2 278.8 M110.1 328.2 L195.8 280.4 M116.9 330.0 L202.4 282.0 M123.7 331.7 L209.1 283.6 M130.6 333.5 L215.7 285.1 M137.4 335.2 L222.4 286.7 M144.3 337.0 L229.1 288.3 M151.3 338.8 L235.9 289.9 M235.9 289.9 L312.9 245.5 M158.2 340.5 L242.6 291.5 M242.6 291.5 L319.5 247.0 M165.2 342.3 L249.4 293.2 M249.4 293.2 L326.1 248.4 M172.2 344.1 L256.2 294.8 M256.2 294.8 L332.7 249.9 M179.2 345.9 L263.0 296.4 M263.0 296.4 L339.3 251.4 M186.2 347.7 L269.9 298.0 M269.9 298.0 L346.0 252.9 M276.8 299.7 L352.7 254.4 M283.7 301.3 L359.4 255.9 M297.5 304.6 L372.8 258.9 M304.5 306.3 L379.6 260.4 M311.5 307.9 L386.4 261.9 M318.5 309.6 L393.2 263.4 M325.5 311.3 L400.0 264.9 M332.6 313.0 L406.9 266.5 M339.7 314.7 L413.8 268.0 M346.8 316.4 L420.7 269.5 M353.9 318.1 L427.6 271.1 M361.1 319.8 L434.5 272.6 M368.2 321.5 L441.5 274.2 M375.4 323.2 L448.5 275.8 M382.7 324.9 L455.5 277.3 M389.9 326.6 L462.6 278.9 M397.2 328.4 L469.6 280.5 M404.5 330.1 L476.7 282.0 M411.9 331.9 L483.8 283.6 M419.2 333.6 L490.9 285.2 M426.6 335.4 L498.1 286.8 M434.0 337.1 L505.3 288.4 M505.3 288.4 L570.2 244.1 M441.4 338.9 L512.5 290.0 M512.5 290.0 L577.1 245.5 M448.9 340.7 L519.7 291.6 M519.7 291.6 L584.1 247.0 M456.4 342.5 L527.0 293.3 M527.0 293.3 L591.2 248.5 M463.9 344.2 L534.2 294.9 M534.2 294.9 L598.2 250.0 M471.4 346.0 L541.5 296.5 M541.5 296.5 L605.3 251.4 M548.9 298.1 L612.4 252.9 M556.2 299.8 L619.5 254.4 M563.6 301.4 L626.6 255.9 M571.0 303.1 L633.8 257.4 M585.8 306.4 L648.2 260.4 M593.3 308.1 L655.4 262.0 M600.8 309.7 L662.7 263.5 M608.3 311.4 L670.0 265.0 M615.9 313.1 L677.3 266.5 M623.5 314.8 L684.6 268.1 M631.1 316.5 L691.9 269.6 M638.7 318.2 L699.3 271.2 M646.3 319.9 L706.7 272.7 M654.0 321.6 L714.1 274.3 M661.7 323.3 L721.6 275.8 M669.5 325.0 L729.1 277.4 M677.2 326.8 L736.5 279.0 M685.0 328.5 L744.1 280.5 M692.8 330.2 L751.6 282.1 M700.7 332.0 L759.2 283.7 M708.5 333.7 L766.8 285.3 M716.4 335.5 L774.4 286.9 M724.3 337.3 L782.0 288.5 M732.3 339.0 L789.7 290.1 M740.3 340.8 L797.4 291.7 M748.3 342.6 L805.1 293.3 M756.3 344.4 L812.9 295.0 M764.4 346.2 L820.7 296.6 M38.7 308.5 L156.2 338.5 M44.5 305.4 L161.8 335.2 M50.3 302.4 L167.4 332.0 M56.0 299.4 L172.9 328.8 M61.6 296.4 L178.4 325.6 M67.3 293.4 L183.8 322.5 M72.9 290.5 L189.3 319.3 M78.5 287.5 L194.6 316.2 M84.0 284.6 L200.0 313.1 M89.5 281.7 L205.3 310.1 M95.0 278.8 L210.6 307.0 M210.6 307.0 L333.2 336.9 M105.9 273.1 L221.1 300.9 M221.1 300.9 L343.3 330.5 M111.3 270.2 L226.3 297.9 M226.3 297.9 L348.2 327.3 M116.6 267.4 L231.5 294.9 M231.5 294.9 L353.2 324.1 M122.0 264.6 L236.6 292.0 M236.6 292.0 L358.1 321.0 M127.2 261.8 L241.7 289.0 M241.7 289.0 L363.0 317.8 M132.5 259.0 L246.8 286.1 M246.8 286.1 L367.8 314.7 M137.7 256.3 L251.8 283.2 M251.8 283.2 L372.7 311.6 M142.9 253.5 L256.8 280.3 M256.8 280.3 L377.4 308.6 M261.8 277.4 L382.2 305.5 M382.2 305.5 L509.9 335.3 M266.8 274.5 L386.9 302.5 M386.9 302.5 L514.4 332.1 M271.7 271.7 L391.7 299.5 M391.7 299.5 L518.8 328.9 M276.6 268.8 L396.3 296.5 M396.3 296.5 L523.3 325.7 M281.5 266.0 L401.0 293.5 M401.0 293.5 L527.7 322.6 M286.3 263.2 L405.6 290.5 M405.6 290.5 L532.0 319.4 M291.1 260.4 L410.2 287.6 M410.2 287.6 L536.4 316.3 M295.9 257.7 L414.8 284.6 M414.8 284.6 L540.7 313.2 M300.7 254.9 L419.3 281.7 M419.3 281.7 L545.0 310.1 M423.8 278.8 L549.3 307.1 M549.3 307.1 L682.3 337.0 M428.3 276.0 L553.5 304.0 M553.5 304.0 L686.3 333.8 M432.8 273.1 L557.7 301.0 M557.7 301.0 L690.2 330.6 M437.2 270.3 L561.9 298.0 M561.9 298.0 L694.1 327.4 M441.6 267.4 L566.1 295.0 M566.1 295.0 L698.0 324.2 M446.0 264.6 L570.2 292.0 M570.2 292.0 L701.9 321.1 M450.4 261.8 L574.3 289.1 M574.3 289.1 L705.7 317.9 M454.7 259.1 L578.4 286.1 M578.4 286.1 L709.5 314.8 M459.0 256.3 L582.5 283.2 M582.5 283.2 L713.3 311.7 M463.3 253.6 L586.5 280.3 M586.5 280.3 L717.1 308.6 M590.6 277.4 L720.8 305.6 M720.8 305.6 L859.0 335.5 M594.6 274.5 L724.5 302.5 M724.5 302.5 L862.4 332.2 M602.5 268.9 L731.9 296.5 M731.9 296.5 L869.1 325.8 M606.4 266.0 L735.5 293.5 M735.5 293.5 L872.4 322.7 M610.3 263.2 L739.2 290.6 M739.2 290.6 L875.7 319.5 M614.2 260.4 L742.8 287.6 M742.8 287.6 L879.0 316.4 M618.0 257.7 L746.4 284.7 M746.4 284.7 L882.3 313.3" stroke="#e8e8e8" stroke-width="1" fill="none"/>
<path d="M130.7 264.9 L210.4 222.7 M137.1 266.4 L216.7 224.1 M143.6 267.9 L222.9 225.5 M150.0 269.5 L229.2 226.9 M156.5 271.0 L235.6 228.3 M163.0 272.6 L241.9 229.7 M169.5 274.1 L248.2 231.1 M176.0 275.7 L254.6 232.5 M182.6 277.2 L261.0 233.9 M189.2 278.8 L267.4 235.4 M267.4 235.4 L339.0 195.6 M195.8 280.4 L273.9 236.8 M273.9 236.8 L345.3 196.9 M202.4 282.0 L280.3 238.2 M280.3 238.2 L351.6 198.3 M209.1 283.6 L286.8 239.7 M286.8 239.7 L357.9 199.6 M215.7 285.1 L293.3 241.1 M293.3 241.1 L364.2 200.9 M222.4 286.7 L299.8 242.6 M299.8 242.6 L370.5 202.2 M229.1 288.3 L306.3 244.0 M306.3 244.0 L376.9 203.6 M312.9 245.5 L383.3 204.9 M319.5 247.0 L389.7 206.2 M326.1 248.4 L396.1 207.6 M332.7 249.9 L402.5 208.9 M339.3 251.4 L409.0 210.3 M346.0 252.9 L415.5 211.6 M352.7 254.4 L422.0 213.0 M359.4 255.9 L428.5 214.4 M372.8 258.9 L441.6 217.1 M379.6 260.4 L448.2 218.5 M386.4 261.9 L454.8 219.9 M393.2 263.4 L461.4 221.3 M400.0 264.9 L468.0 222.7 M406.9 266.5 L474.7 224.1 M413.8 268.0 L481.4 225.5 M420.7 269.5 L488.1 226.9 M427.6 271.1 L494.8 228.3 M434.5 272.6 L501.5 229.7 M441.5 274.2 L508.3 231.1 M448.5 275.8 L515.1 232.5 M455.5 277.3 L521.9 234.0 M462.6 278.9 L528.7 235.4 M469.6 280.5 L535.6 236.8 M476.7 282.0 L542.5 238.3 M483.8 283.6 L549.3 239.7 M490.9 285.2 L556.3 241.2 M498.1 286.8 L563.2 242.6 M148.1 250.8 L261.8 277.4 M153.3 248.1 L266.8 274.5 M158.4 245.4 L271.7 271.7 M163.5 242.7 L276.6 268.8 M168.5 240.1 L281.5 266.0 M173.5 237.4 L286.3 263.2 M178.5 234.8 L291.1 260.4 M183.5 232.2 L295.9 257.7 M188.4 229.6 L300.7 254.9 M193.4 227.0 L305.4 252.2 M305.4 252.2 L423.8 278.8 M198.2 224.4 L310.1 249.5 M310.1 249.5 L428.3 276.0 M203.1 221.8 L314.8 246.8 M314.8 246.8 L432.8 273.1 M207.9 219.3 L319.4 244.1 M319.4 244.1 L437.2 270.3 M212.7 216.8 L324.0 241.4 M324.0 241.4 L441.6 267.4 M217.5 214.2 L328.6 238.7 M328.6 238.7 L446.0 264.6 M222.3 211.7 L333.2 236.1 M333.2 236.1 L450.4 261.8 M227.0 209.2 L337.8 233.5 M337.8 233.5 L454.7 259.1 M231.7 206.8 L342.3 230.9 M342.3 230.9 L459.0 256.3 M236.4 204.3 L346.8 228.3 M346.8 228.3 L463.3 253.6 M351.2 225.7 L467.6 250.8 M467.6 250.8 L590.6 277.4 M355.7 223.1 L471.8 248.1 M471.8 248.1 L594.6 274.5 M364.5 218.0 L480.2 242.7 M480.2 242.7 L602.5 268.9 M368.9 215.5 L484.4 240.1 M484.4 240.1 L606.4 266.0 M373.2 213.0 L488.5 237.4 M488.5 237.4 L610.3 263.2 M377.5 210.5 L492.6 234.8 M492.6 234.8 L614.2 260.4 M381.8 208.0 L496.7 232.1 M496.7 232.1 L618.0 257.7" stroke="#eaeaea" stroke-width="1" fill="none"/>
<path d="M210.4 222.7 L283.4 184.0 M216.7 224.1 L289.5 185.2 M222.9 225.5 L295.7 186.5 M229.2 226.9 L301.8 187.8 M235.6 228.3 L308.0 189.1 M241.9 229.7 L314.1 190.4 M248.2 231.1 L320.3 191.7 M254.6 232.5 L326.5 193.0 M261.0 233.9 L332.8 194.3 M241.0 201.8 L351.2 225.7 M245.7 199.4 L355.7 223.1 M254.8 194.6 L364.5 218.0 M259.4 192.2 L368.9 215.5 M263.9 189.8 L373.2 213.0 M268.4 187.4 L377.5 210.5 M272.9 185.0 L381.8 208.0" stroke="#ececec" stroke-width="1" fill="none"/>

<path d="M391.4 242.1 L435.0 215.8 M250.3 197.0 L320.2 212.0 M320.2 212.0 L392.6 227.5" stroke="#b7b7b7" stroke-width="1.0" stroke-linecap="round" fill="none"/>
<path d="M244.1 331.0 L296.2 299.6 M296.2 299.6 L345.2 270.0 M345.2 270.0 L391.4 242.1 M559.4 318.6 L601.4 287.9 M601.4 287.9 L641.0 258.9 M100.5 275.9 L173.9 293.8 M173.9 293.8 L250.1 312.3 M250.1 312.3 L329.3 331.5 M392.6 227.5 L467.5 243.6 M467.5 243.6 L545.2 260.2 M545.2 260.2 L625.7 277.5 M625.7 277.5 L709.2 295.4 M709.2 295.4 L796.0 314.1" stroke="#b7b7b7" stroke-width="1.1" stroke-linecap="round" fill="none"/>
<path d="M129.4 400.3 L188.6 364.5 M188.6 364.5 L244.1 331.0 M416.0 423.6 L467.0 386.3 M467.0 386.3 L514.7 351.4 M514.7 351.4 L559.4 318.6 M1091.1 394.7 L1119.0 359.1 M-78.3 370.1 L-1.3 391.7 M-1.3 391.7 L78.9 414.1 M329.3 331.5 L411.6 351.5 M411.6 351.5 L497.2 372.3 M497.2 372.3 L586.3 393.9 M586.3 393.9 L679.3 416.5 M796.0 314.1 L886.1 333.4 M886.1 333.4 L979.7 353.5 M979.7 353.5 L1077.2 374.4 M1077.2 374.4 L1178.7 396.2 M1178.7 396.2 L1284.6 418.9" stroke="#b7b7b7" stroke-width="1.2" stroke-linecap="round" fill="none"/>
<path d="M-74.9 523.6 L-1.9 479.5 M-1.9 479.5 L66.0 438.5 M66.0 438.5 L129.4 400.3 M302.8 506.4 L361.4 463.5 M361.4 463.5 L416.0 423.6 M994.9 517.1 L1029.3 473.3 M1029.3 473.3 L1061.3 432.6 M1061.3 432.6 L1091.1 394.7 M1357.8 500.0 L1378.9 457.4 M1378.9 457.4 L1398.5 417.7 M78.9 414.1 L162.6 437.5 M162.6 437.5 L249.9 461.9 M249.9 461.9 L341.1 487.4 M679.3 416.5 L776.2 440.0 M776.2 440.0 L877.3 464.6 M877.3 464.6 L983.0 490.2 M1284.6 418.9 L1394.9 442.6 M1394.9 442.6 L1510.2 467.3" stroke="#b7b7b7" stroke-width="1.3" stroke-linecap="round" fill="none"/>
<path d="M-153.5 571.1 L-74.9 523.6 M171.5 602.5 L239.6 552.6 M239.6 552.6 L302.8 506.4 M957.9 564.2 L994.9 517.1 M1310.7 595.3 L1335.2 545.8 M1335.2 545.8 L1357.8 500.0 M341.1 487.4 L436.5 514.0 M436.5 514.0 L536.3 541.9 M536.3 541.9 L640.9 571.2 M640.9 571.2 L750.7 601.9 M983.0 490.2 L1093.6 517.1 M1093.6 517.1 L1209.3 545.2 M1209.3 545.2 L1330.7 574.7" stroke="#b7b7b7" stroke-width="1.4" stroke-linecap="round" fill="none"/>
<path d="M-330.7 678.1 L-238.5 622.4 M-238.5 622.4 L-153.5 571.1 M97.7 656.5 L171.5 602.5 M874.5 670.3 L917.9 615.1 M917.9 615.1 L957.9 564.2 M1284.3 648.9 L1310.7 595.3 M-564.2 626.3 L-480.7 659.6 M-480.7 659.6 L-392.8 694.7 M750.7 601.9 L866.0 634.1 M866.0 634.1 L987.3 668.0 M1330.7 574.7 L1458.0 605.6" stroke="#b7b7b7" stroke-width="1.5" stroke-linecap="round" fill="none"/>
<path d="M-431.0 738.6 L-330.7 678.1 M-70.0 779.2 L17.5 715.2 M17.5 715.2 L97.7 656.5 M775.8 796.0 L827.3 730.4 M827.3 730.4 L874.5 670.3 M1224.1 770.6 L1255.5 707.1 M1255.5 707.1 L1284.3 648.9 M-392.8 694.7 L-300.3 731.7 M-300.3 731.7 L-202.5 770.8 M987.3 668.0 L1115.0 703.7 M1115.0 703.7 L1249.6 741.3 M1249.6 741.3 L1391.8 781.0" stroke="#b7b7b7" stroke-width="1.6" stroke-linecap="round" fill="none"/>
<path d="M-540.5 804.7 L-431.0 738.6 M-165.8 849.2 L-70.0 779.2 M719.4 867.8 L775.8 796.0 M1189.8 840.1 L1224.1 770.6 M-202.5 770.8 L-99.3 812.0 M-99.3 812.0 L10.1 855.7" stroke="#b7b7b7" stroke-width="1.7" stroke-linecap="round" fill="none"/>
<path d="M-271.0 926.3 L-165.8 849.2 M657.2 946.9 L719.4 867.8 M1152.1 916.4 L1189.8 840.1 M10.1 855.7 L126.0 902.0 M126.0 902.0 L249.2 951.3" stroke="#b7b7b7" stroke-width="1.8" stroke-linecap="round" fill="none"/>
<path d="M588.4 1034.5 L657.2 946.9 M1110.4 1000.7 L1152.1 916.4 M249.2 951.3 L380.2 1003.6" stroke="#b7b7b7" stroke-width="1.9" stroke-linecap="round" fill="none"/>
<path d="M426.4 1240.8 L512.0 1131.8 M512.0 1131.8 L588.4 1034.5 M888.7 1449.3 L954.4 1316.4 M954.4 1316.4 L1012.5 1198.9 M1012.5 1198.9 L1064.1 1094.4 M1064.1 1094.4 L1110.4 1000.7 M380.2 1003.6 L520.0 1059.5 M520.0 1059.5 L669.4 1119.2 M669.4 1119.2 L829.4 1183.1 M829.4 1183.1 L1001.3 1251.8 M1001.3 1251.8 L1186.2 1325.7" stroke="#b7b7b7" stroke-width="2.0" stroke-linecap="round" fill="none"/>

<path d="M-735.7 716.7 L277.4 182.7 L1519.3 443.1" stroke="#5e5e5e" stroke-width="1.3" fill="none"/>
<path d="M-295.2 484.5 L1305.0 1011.1" stroke="#f08080" stroke-width="1.2" fill="none"/>
<path d="M46.5 1069.5 L867.9 306.5" stroke="#6ee86e" stroke-width="1.3" fill="none"/>
<!-- shadow under disc -->
<ellipse cx="445" cy="838" rx="225" ry="62" fill="url(#shad)"/>
<!-- disc side -->
<path d="M210.2 699.4 L214.9 739.8 L214.9 741.9 L215.0 744.0 L215.2 746.0 L215.5 748.1 L215.8 750.2 L216.2 752.3 L216.6 754.4 L217.1 756.4 L217.7 758.5 L218.3 760.6 L219.0 762.6 L219.8 764.7 L220.7 766.7 L221.6 768.7 L222.5 770.7 L223.6 772.8 L224.7 774.8 L225.8 776.7 L227.1 778.7 L228.4 780.7 L229.7 782.6 L231.2 784.5 L232.7 786.5 L234.2 788.4 L235.8 790.2 L237.5 792.1 L239.3 794.0 L241.1 795.8 L242.9 797.6 L244.9 799.4 L246.9 801.2 L248.9 802.9 L251.1 804.6 L253.2 806.3 L255.5 808.0 L257.8 809.7 L260.1 811.3 L262.5 812.9 L265.0 814.5 L267.5 816.0 L270.1 817.5 L272.8 819.0 L275.5 820.5 L278.2 821.9 L281.0 823.3 L283.8 824.7 L286.7 826.0 L289.7 827.3 L292.7 828.6 L295.7 829.8 L298.8 831.0 L302.0 832.2 L305.1 833.3 L308.4 834.5 L311.6 835.5 L314.9 836.5 L318.3 837.5 L321.7 838.5 L325.1 839.4 L328.5 840.3 L332.0 841.1 L335.6 841.9 L339.1 842.7 L342.7 843.4 L346.3 844.1 L350.0 844.7 L353.6 845.3 L357.3 845.9 L361.1 846.4 L364.8 846.9 L368.6 847.3 L372.4 847.7 L376.2 848.1 L380.0 848.4 L383.8 848.7 L387.7 848.9 L391.6 849.1 L395.4 849.2 L399.3 849.3 L403.2 849.4 L407.1 849.4 L411.0 849.3 L414.9 849.3 L418.8 849.2 L422.7 849.0 L426.7 848.8 L430.6 848.6 L434.5 848.3 L438.4 847.9 L442.3 847.6 L446.1 847.2 L450.0 846.7 L453.9 846.2 L457.7 845.7 L461.6 845.1 L465.4 844.5 L469.2 843.8 L473.0 843.1 L476.7 842.4 L480.5 841.6 L484.2 840.8 L487.9 839.9 L491.5 839.0 L495.2 838.1 L498.8 837.1 L502.4 836.1 L505.9 835.1 L509.4 834.0 L512.9 832.9 L516.4 831.7 L519.8 830.5 L523.1 829.3 L526.5 828.0 L529.8 826.7 L533.0 825.4 L536.2 824.1 L539.4 822.7 L542.5 821.3 L545.6 819.8 L548.7 818.3 L551.6 816.8 L554.6 815.3 L557.5 813.7 L560.3 812.2 L563.1 810.5 L565.8 808.9 L568.5 807.2 L571.2 805.6 L573.7 803.8 L576.3 802.1 L578.7 800.4 L581.1 798.6 L583.5 796.8 L585.8 795.0 L588.0 793.1 L590.2 791.3 L592.3 789.4 L594.4 787.5 L596.4 785.6 L598.3 783.7 L600.2 781.7 L602.0 779.8 L603.8 777.8 L605.5 775.8 L607.1 773.8 L608.7 771.8 L610.2 769.8 L611.7 767.8 L613.0 765.7 L614.3 763.7 L615.6 761.6 L616.8 759.6 L617.9 757.5 L619.0 755.4 L620.0 753.4 L620.9 751.3 L621.8 749.2 L622.6 747.1 L623.3 745.0 L624.0 742.9 L624.6 740.9 L625.1 738.8 L625.6 736.7 L626.0 734.6 L626.4 732.5 L626.7 730.4 L626.9 728.3 L627.0 726.3 L627.1 724.2 L627.2 722.1 L627.5 682.0 L627.5 682.0 L627.5 684.0 L627.4 686.1 L627.2 688.1 L627.0 690.2 L626.7 692.2 L626.4 694.3 L625.9 696.3 L625.5 698.4 L624.9 700.4 L624.3 702.5 L623.6 704.5 L622.9 706.6 L622.1 708.6 L621.2 710.7 L620.2 712.7 L619.2 714.8 L618.2 716.8 L617.0 718.8 L615.8 720.9 L614.6 722.9 L613.2 724.9 L611.8 726.9 L610.4 728.9 L608.8 730.9 L607.2 732.9 L605.6 734.8 L603.9 736.8 L602.1 738.7 L600.3 740.6 L598.4 742.5 L596.4 744.4 L594.4 746.3 L592.3 748.2 L590.1 750.0 L587.9 751.9 L585.6 753.7 L583.3 755.5 L580.9 757.2 L578.5 759.0 L576.0 760.7 L573.4 762.4 L570.8 764.1 L568.2 765.8 L565.4 767.4 L562.7 769.0 L559.8 770.6 L557.0 772.2 L554.0 773.7 L551.1 775.2 L548.0 776.7 L545.0 778.2 L541.8 779.6 L538.7 781.0 L535.5 782.3 L532.2 783.7 L528.9 785.0 L525.6 786.2 L522.2 787.5 L518.8 788.7 L515.3 789.9 L511.8 791.0 L508.3 792.1 L504.7 793.2 L501.1 794.2 L497.5 795.2 L493.8 796.1 L490.2 797.1 L486.4 797.9 L482.7 798.8 L478.9 799.6 L475.2 800.4 L471.3 801.1 L467.5 801.8 L463.7 802.4 L459.8 803.0 L455.9 803.6 L452.0 804.1 L448.1 804.6 L444.2 805.1 L440.2 805.5 L436.3 805.9 L432.4 806.2 L428.4 806.5 L424.4 806.7 L420.5 806.9 L416.5 807.1 L412.6 807.2 L408.6 807.3 L404.6 807.3 L400.7 807.3 L396.7 807.2 L392.8 807.1 L388.9 807.0 L385.0 806.8 L381.1 806.6 L377.2 806.3 L373.3 806.0 L369.4 805.7 L365.6 805.3 L361.8 804.8 L358.0 804.4 L354.2 803.9 L350.5 803.3 L346.8 802.7 L343.1 802.1 L339.4 801.4 L335.8 800.7 L332.2 800.0 L328.6 799.2 L325.1 798.3 L321.6 797.5 L318.1 796.6 L314.7 795.6 L311.3 794.6 L307.9 793.6 L304.6 792.6 L301.4 791.5 L298.2 790.4 L295.0 789.2 L291.9 788.0 L288.8 786.8 L285.8 785.6 L282.8 784.3 L279.8 783.0 L277.0 781.6 L274.1 780.2 L271.4 778.8 L268.6 777.4 L266.0 775.9 L263.4 774.4 L260.8 772.9 L258.3 771.3 L255.9 769.8 L253.5 768.2 L251.2 766.5 L248.9 764.9 L246.7 763.2 L244.6 761.5 L242.5 759.8 L240.5 758.1 L238.5 756.3 L236.6 754.5 L234.8 752.7 L233.0 750.9 L231.3 749.1 L229.7 747.2 L228.1 745.3 L226.6 743.5 L225.2 741.6 L223.8 739.6 L222.5 737.7 L221.2 735.8 L220.1 733.8 L219.0 731.8 L217.9 729.9 L216.9 727.9 L216.0 725.9 L215.2 723.9 L214.4 721.9 L213.7 719.9 L213.1 717.8 L212.5 715.8 L212.0 713.8 L211.5 711.7 L211.2 709.7 L210.8 707.6 L210.6 705.6 L210.4 703.5 L210.3 701.5 L210.2 699.4Z" fill="url(#sideg)"/>
<path d="M210.2 699.4 L214.9 739.8 L214.9 741.9 L215.0 744.0 L215.2 746.0 L215.5 748.1 L215.8 750.2 L216.2 752.3 L216.6 754.4 L217.1 756.4 L217.7 758.5 L218.3 760.6 L219.0 762.6 L219.8 764.7 L220.7 766.7 L221.6 768.7 L222.5 770.7 L223.6 772.8 L224.7 774.8 L225.8 776.7 L227.1 778.7 L228.4 780.7 L229.7 782.6 L231.2 784.5 L232.7 786.5 L234.2 788.4 L235.8 790.2 L237.5 792.1 L239.3 794.0 L241.1 795.8 L242.9 797.6 L244.9 799.4 L246.9 801.2 L248.9 802.9 L251.1 804.6 L253.2 806.3 L255.5 808.0 L257.8 809.7 L260.1 811.3 L262.5 812.9 L265.0 814.5 L267.5 816.0 L270.1 817.5 L272.8 819.0 L275.5 820.5 L278.2 821.9 L281.0 823.3 L283.8 824.7 L286.7 826.0 L289.7 827.3 L292.7 828.6 L295.7 829.8 L298.8 831.0 L302.0 832.2 L305.1 833.3 L308.4 834.5 L311.6 835.5 L314.9 836.5 L318.3 837.5 L321.7 838.5 L325.1 839.4 L328.5 840.3 L332.0 841.1 L335.6 841.9 L339.1 842.7 L342.7 843.4 L346.3 844.1 L350.0 844.7 L353.6 845.3 L357.3 845.9 L361.1 846.4 L364.8 846.9 L368.6 847.3 L372.4 847.7 L376.2 848.1 L380.0 848.4 L383.8 848.7 L387.7 848.9 L391.6 849.1 L395.4 849.2 L399.3 849.3 L403.2 849.4 L407.1 849.4 L411.0 849.3 L414.9 849.3 L418.8 849.2 L422.7 849.0 L426.7 848.8 L430.6 848.6 L434.5 848.3 L438.4 847.9 L442.3 847.6 L446.1 847.2 L450.0 846.7 L453.9 846.2 L457.7 845.7 L461.6 845.1 L465.4 844.5 L469.2 843.8 L473.0 843.1 L476.7 842.4 L480.5 841.6 L484.2 840.8 L487.9 839.9 L491.5 839.0 L495.2 838.1 L498.8 837.1 L502.4 836.1 L505.9 835.1 L509.4 834.0 L512.9 832.9 L516.4 831.7 L519.8 830.5 L523.1 829.3 L526.5 828.0 L529.8 826.7 L533.0 825.4 L536.2 824.1 L539.4 822.7 L542.5 821.3 L545.6 819.8 L548.7 818.3 L551.6 816.8 L554.6 815.3 L557.5 813.7 L560.3 812.2 L563.1 810.5 L565.8 808.9 L568.5 807.2 L571.2 805.6 L573.7 803.8 L576.3 802.1 L578.7 800.4 L581.1 798.6 L583.5 796.8 L585.8 795.0 L588.0 793.1 L590.2 791.3 L592.3 789.4 L594.4 787.5 L596.4 785.6 L598.3 783.7 L600.2 781.7 L602.0 779.8 L603.8 777.8 L605.5 775.8 L607.1 773.8 L608.7 771.8 L610.2 769.8 L611.7 767.8 L613.0 765.7 L614.3 763.7 L615.6 761.6 L616.8 759.6 L617.9 757.5 L619.0 755.4 L620.0 753.4 L620.9 751.3 L621.8 749.2 L622.6 747.1 L623.3 745.0 L624.0 742.9 L624.6 740.9 L625.1 738.8 L625.6 736.7 L626.0 734.6 L626.4 732.5 L626.7 730.4 L626.9 728.3 L627.0 726.3 L627.1 724.2 L627.2 722.1 L627.5 682.0" fill="none" stroke="#111" stroke-width="1.6"/>
<!-- disc top -->
<path d="M602.1 738.7 L603.9 736.8 L605.6 734.8 L607.2 732.9 L608.8 730.9 L610.4 728.9 L611.8 726.9 L613.2 724.9 L614.6 722.9 L615.8 720.9 L617.0 718.8 L618.2 716.8 L619.2 714.8 L620.2 712.7 L621.2 710.7 L622.1 708.6 L622.9 706.6 L623.6 704.5 L624.3 702.5 L624.9 700.4 L625.5 698.4 L625.9 696.3 L626.4 694.3 L626.7 692.2 L627.0 690.2 L627.2 688.1 L627.4 686.1 L627.5 684.0 L627.5 682.0 L627.5 680.0 L627.4 677.9 L627.3 675.9 L627.0 673.9 L626.8 671.9 L626.4 669.9 L626.0 667.9 L625.6 666.0 L625.0 664.0 L624.5 662.1 L623.8 660.1 L623.1 658.2 L622.4 656.3 L621.5 654.4 L620.7 652.5 L619.7 650.6 L618.7 648.7 L617.7 646.9 L616.6 645.0 L615.4 643.2 L614.2 641.4 L612.9 639.6 L611.6 637.9 L610.3 636.1 L608.8 634.4 L607.3 632.7 L605.8 631.0 L604.2 629.3 L602.6 627.6 L600.9 626.0 L599.2 624.4 L597.4 622.8 L595.6 621.2 L593.7 619.6 L591.8 618.1 L589.9 616.6 L587.8 615.1 L585.8 613.6 L583.7 612.1 L581.6 610.7 L579.4 609.3 L577.2 607.9 L574.9 606.6 L572.6 605.3 L570.3 604.0 L567.9 602.7 L565.5 601.4 L563.0 600.2 L560.5 599.0 L558.0 597.8 L555.4 596.6 L552.9 595.5 L550.2 594.4 L547.6 593.3 L544.9 592.3 L542.2 591.3 L539.4 590.3 L536.6 589.3 L533.8 588.4 L531.0 587.4 L528.1 586.6 L525.2 585.7 L522.3 584.9 L519.3 584.1 L516.4 583.3 L513.4 582.5 L510.4 581.8 L507.3 581.1 L504.3 580.5 L501.2 579.9 L498.1 579.2 L495.0 578.7 L491.8 578.1 L488.7 577.6 L485.5 577.1 L482.3 576.7 L479.1 576.3 L475.9 575.9 L472.6 575.5 L469.4 575.2 L466.1 574.9 L462.9 574.6 L459.6 574.3 L456.3 574.1 L453.0 573.9 L449.7 573.8 L446.4 573.6 L443.1 573.5 L439.7 573.5 L436.4 573.4 L433.1 573.4 L429.7 573.5 L426.4 573.5 L423.0 573.6 L419.7 573.7 L416.4 573.9 L413.0 574.0 L409.7 574.2 L406.3 574.5 L403.0 574.7 L399.6 575.0 L396.3 575.4 L393.0 575.7 L389.7 576.1 L386.3 576.5 L383.0 576.9 L379.7 577.4 L376.4 577.9 L373.2 578.4 L369.9 579.0 L366.6 579.6 L363.4 580.2 L360.1 580.9 L356.9 581.5 L353.7 582.2 L350.5 583.0 L347.3 583.7 L344.2 584.5 L341.0 585.3 L337.9 586.2 L334.8 587.1 L331.7 588.0 L328.7 588.9 L325.6 589.8 L322.6 590.8 L319.6 591.8 L316.6 592.9 L313.7 593.9 L310.8 595.0 L307.9 596.1 L305.0 597.3 L302.2 598.5 L299.3 599.7 L296.6 600.9 L293.8 602.1 L291.1 603.4 L288.4 604.7 L285.7 606.0 L283.1 607.3 L280.5 608.7 L278.0 610.1 L275.5 611.5 L273.0 613.0 L270.5 614.4 L268.1 615.9 L265.7 617.4 L263.4 618.9 L261.1 620.5 L258.9 622.0 L256.7 623.6 L254.5 625.2 L252.4 626.9 L250.3 628.5 L248.3 630.2 L246.3 631.9 L244.3 633.6 L242.4 635.3 L240.6 637.1 L238.8 638.8 L237.0 640.6 L235.3 642.4 L233.7 644.2 L232.1 646.0 L230.5 647.9 L229.0 649.7 L227.6 651.6 L226.2 653.5 L224.9 655.4 L223.6 657.3 L222.4 659.2 L221.2 661.1 L220.1 663.1 L219.0 665.0 L218.0 667.0 L217.1 669.0 L216.2 671.0 L215.4 673.0 L214.6 675.0 L213.9 677.0 L213.3 679.0 L212.7 681.0 L212.2 683.0 L211.7 685.1 L211.3 687.1 L211.0 689.2 L210.7 691.2 L210.5 693.3 L210.3 695.3 L210.3 697.4 L210.2 699.4 L210.3 701.5 L210.4 703.5 L210.6 705.6 L210.8 707.6 L211.2 709.7 L211.5 711.7 L212.0 713.8 L212.5 715.8 L213.1 717.8 L213.7 719.9 L214.4 721.9 L215.2 723.9 L216.0 725.9 L216.9 727.9 L217.9 729.9 L219.0 731.8 L220.1 733.8 L221.2 735.8 L222.5 737.7 L223.8 739.6 L225.2 741.6 L226.6 743.5 L228.1 745.3 L229.7 747.2 L231.3 749.1 L233.0 750.9 L234.8 752.7 L236.6 754.5 L238.5 756.3 L240.5 758.1 L242.5 759.8 L244.6 761.5 L246.7 763.2 L248.9 764.9 L251.2 766.5 L253.5 768.2 L255.9 769.8 L258.3 771.3 L260.8 772.9 L263.4 774.4 L266.0 775.9 L268.6 777.4 L271.4 778.8 L274.1 780.2 L277.0 781.6 L279.8 783.0 L282.8 784.3 L285.8 785.6 L288.8 786.8 L291.9 788.0 L295.0 789.2 L298.2 790.4 L301.4 791.5 L304.6 792.6 L307.9 793.6 L311.3 794.6 L314.7 795.6 L318.1 796.6 L321.6 797.5 L325.1 798.3 L328.6 799.2 L332.2 800.0 L335.8 800.7 L339.4 801.4 L343.1 802.1 L346.8 802.7 L350.5 803.3 L354.2 803.9 L358.0 804.4 L361.8 804.8 L365.6 805.3 L369.4 805.7 L373.3 806.0 L377.2 806.3 L381.1 806.6 L385.0 806.8 L388.9 807.0 L392.8 807.1 L396.7 807.2 L400.7 807.3 L404.6 807.3 L408.6 807.3 L412.6 807.2 L416.5 807.1 L420.5 806.9 L424.4 806.7 L428.4 806.5 L432.4 806.2 L436.3 805.9 L440.2 805.5 L444.2 805.1 L448.1 804.6 L452.0 804.1 L455.9 803.6 L459.8 803.0 L463.7 802.4 L467.5 801.8 L471.3 801.1 L475.2 800.4 L478.9 799.6 L482.7 798.8 L486.4 797.9 L490.2 797.1 L493.8 796.1 L497.5 795.2 L501.1 794.2 L504.7 793.2 L508.3 792.1 L511.8 791.0 L515.3 789.9 L518.8 788.7 L522.2 787.5 L525.6 786.2 L528.9 785.0 L532.2 783.7 L535.5 782.3 L538.7 781.0 L541.8 779.6 L545.0 778.2 L548.0 776.7 L551.1 775.2 L554.0 773.7 L557.0 772.2 L559.8 770.6 L562.7 769.0 L565.4 767.4 L568.2 765.8 L570.8 764.1 L573.4 762.4 L576.0 760.7 L578.5 759.0 L580.9 757.2 L583.3 755.5 L585.6 753.7 L587.9 751.9 L590.1 750.0 L592.3 748.2 L594.4 746.3 L596.4 744.4 L598.4 742.5 L600.3 740.6Z" fill="#56539d" stroke="#2a3a86" stroke-width="1"/>
<path d="M210.2 699.4 L210.3 701.5 L210.4 703.5 L210.6 705.6 L210.8 707.6 L211.2 709.7 L211.5 711.7 L212.0 713.8 L212.5 715.8 L213.1 717.8 L213.7 719.9 L214.4 721.9 L215.2 723.9 L216.0 725.9 L216.9 727.9 L217.9 729.9 L219.0 731.8 L220.1 733.8 L221.2 735.8 L222.5 737.7 L223.8 739.6 L225.2 741.6 L226.6 743.5 L228.1 745.3 L229.7 747.2 L231.3 749.1 L233.0 750.9 L234.8 752.7 L236.6 754.5 L238.5 756.3 L240.5 758.1 L242.5 759.8 L244.6 761.5 L246.7 763.2 L248.9 764.9 L251.2 766.5 L253.5 768.2 L255.9 769.8 L258.3 771.3 L260.8 772.9 L263.4 774.4 L266.0 775.9 L268.6 777.4 L271.4 778.8 L274.1 780.2 L277.0 781.6 L279.8 783.0 L282.8 784.3 L285.8 785.6 L288.8 786.8 L291.9 788.0 L295.0 789.2 L298.2 790.4 L301.4 791.5 L304.6 792.6 L307.9 793.6 L311.3 794.6 L314.7 795.6 L318.1 796.6 L321.6 797.5 L325.1 798.3 L328.6 799.2 L332.2 800.0 L335.8 800.7 L339.4 801.4 L343.1 802.1 L346.8 802.7 L350.5 803.3 L354.2 803.9 L358.0 804.4 L361.8 804.8 L365.6 805.3 L369.4 805.7 L373.3 806.0 L377.2 806.3 L381.1 806.6 L385.0 806.8 L388.9 807.0 L392.8 807.1 L396.7 807.2 L400.7 807.3 L404.6 807.3 L408.6 807.3 L412.6 807.2 L416.5 807.1 L420.5 806.9 L424.4 806.7 L428.4 806.5 L432.4 806.2 L436.3 805.9 L440.2 805.5 L444.2 805.1 L448.1 804.6 L452.0 804.1 L455.9 803.6 L459.8 803.0 L463.7 802.4 L467.5 801.8 L471.3 801.1 L475.2 800.4 L478.9 799.6 L482.7 798.8 L486.4 797.9 L490.2 797.1 L493.8 796.1 L497.5 795.2 L501.1 794.2 L504.7 793.2 L508.3 792.1 L511.8 791.0 L515.3 789.9 L518.8 788.7 L522.2 787.5 L525.6 786.2 L528.9 785.0 L532.2 783.7 L535.5 782.3 L538.7 781.0 L541.8 779.6 L545.0 778.2 L548.0 776.7 L551.1 775.2 L554.0 773.7 L557.0 772.2 L559.8 770.6 L562.7 769.0 L565.4 767.4 L568.2 765.8 L570.8 764.1 L573.4 762.4 L576.0 760.7 L578.5 759.0 L580.9 757.2 L583.3 755.5 L585.6 753.7 L587.9 751.9 L590.1 750.0 L592.3 748.2 L594.4 746.3 L596.4 744.4 L598.4 742.5 L600.3 740.6 L602.1 738.7 L603.9 736.8 L605.6 734.8 L607.2 732.9 L608.8 730.9 L610.4 728.9 L611.8 726.9 L613.2 724.9 L614.6 722.9 L615.8 720.9 L617.0 718.8 L618.2 716.8 L619.2 714.8 L620.2 712.7 L621.2 710.7 L622.1 708.6 L622.9 706.6 L623.6 704.5 L624.3 702.5 L624.9 700.4 L625.5 698.4 L625.9 696.3 L626.4 694.3 L626.7 692.2 L627.0 690.2 L627.2 688.1 L627.4 686.1 L627.5 684.0 L627.5 682.0" fill="none" stroke="#d9a9a4" stroke-width="1.4" transform="translate(0,1.2)"/>
<!-- origin planes -->
<polygon points="424.6,630.5 472.2,590.2 474.5,662.5 428.2,703.7" fill="#9a9a9a" fill-opacity=".24" stroke="#a5a5a8" stroke-opacity=".35" stroke-width=".8"/>
<polygon points="428.2,639.6 506,664.3 507.9,738.5 431,710.1" fill="#9a9a9a" fill-opacity=".24" stroke="#a5a5a8" stroke-opacity=".35" stroke-width=".8"/>
<polygon points="440.1,717.4 485,675.3 558.2,698.2 515.2,743" fill="#9a9a9a" fill-opacity=".17" stroke="#a5a5a8" stroke-opacity=".3" stroke-width=".8"/>
<line x1="425.5" y1="717.4" x2="482.2" y2="665.8" stroke="#3f9a9c" stroke-width="1.7" stroke-dasharray="16 5 9 5"/>
<line x1="428.2" y1="722.9" x2="520" y2="752.4" stroke="#8a3f7d" stroke-width="1.5" stroke-dasharray="30 7 8 7"/>
<!-- z line -->
<line x1="401.5" y1="328.2" x2="416.3" y2="574" stroke="#111" stroke-width="1.9"/>
<line x1="416.3" y1="574" x2="418" y2="630" stroke="#12307c" stroke-width="1.5"/>
<line x1="419.8" y1="665" x2="422" y2="717" stroke="#2f4fc0" stroke-width="1.3"/>
<line x1="417.9" y1="628" x2="419.4" y2="663" stroke="#0a3cff" stroke-width="2.4"/>
<line x1="419.6" y1="667" x2="420.2" y2="679" stroke="#0a3cff" stroke-width="2.4"/>
<circle cx="422.1" cy="720.6" r="5" fill="#7f86d2" stroke="#6068b8" stroke-width="1"/>
<!-- plane -->
<polygon points="599.9,205.6 910.5,268.3 759.9,406.6 420.1,326.1" fill="#ffc861" fill-opacity="0.47" stroke="#fbc05c" stroke-width="1.3"/>
<!-- arrow manipulator -->
<path d="M398.9 294.6 L412.8 313.2 L405.9 313.6 L405.9 326 L395.3 326 L395.3 313.6 L386.8 313.4 Z" fill="#fff" stroke="#46648f" stroke-width="1.1" stroke-linejoin="round"/>
<path d="M399.1 299.2 L408 311 L403.2 311 L403.2 323 L397.8 323 L397.8 311 L391.5 311.1 Z" fill="#0a96d8"/>
<text x="389" y="507.8" font-family="Liberation Sans, sans-serif" font-size="14.8" fill="#444">315.00</text>

</svg>
</div>
<!-- BROWSER -->
<div class="abs panelhdr" style="left:5px;top:152px;width:300px;height:25px"></div>
<div class="abs" style="left:30px;top:157.5px;font-size:10.7px;color:#444">BROWSER</div>
<svg class="abs" style="left:5px;top:152px" width="300" height="25" viewBox="5 152 300 25"><path d="M14.5 161L10 164.3L14.5 167.6ZM20 161L15.5 164.3L20 167.6Z" fill="#222"/><circle cx="288.5" cy="164" r="4.6" fill="#222"/><rect x="285.8" y="163.3" width="5.4" height="1.5" fill="#f1f1f1"/><path d="M300.5 157V170.5" stroke="#555" stroke-width="1"/><path d="M302.5 160V168" stroke="#888" stroke-width="1"/></svg>
<!-- rows -->
<div class="row" style="left:41px;top:182px;width:152.5px;height:20px"></div>
<div class="abs" style="left:43px;top:184px;width:2.5px;height:16px;background:#62f2dc"></div>
<div class="abs" style="left:71px;top:184px;width:97.5px;height:16px;background:#9a9a9a"></div>
<div class="abs" style="left:104px;top:186px;font-size:10.7px;font-weight:bold;color:#fff">(Unsaved)</div>
<div class="row" style="left:59px;top:206px;width:137.5px;height:20px"><span style="left:33.4px;top:4px">Document Settings</span></div>
<div class="row" style="left:59px;top:230px;width:109.5px;height:20px"><span style="left:33.4px;top:4px">Named Views</span></div>
<div class="row" style="left:59px;top:254px;width:98px;height:20px"><span style="left:58px;top:4px">Origin</span></div>
<div class="row" style="left:59px;top:278px;width:102px;height:20px"><span style="left:58px;top:4px">Bodies</span></div>
<div class="row" style="left:59px;top:302px;width:114.5px;height:20px"><span style="left:58px;top:4px">Sketches</span></div>
<div class="row" style="left:77px;top:326px;width:106.5px;height:20px"><span style="left:58px;top:4px">Sketch1</span></div>
<svg class="abs" style="left:0;top:180px" width="210" height="170" viewBox="0 180 210 170">
<defs>
<g id="eye"><path d="M-.5 0Q7.5 -9.6 15.500 0Q7.5 9.600 -.5 0Z" fill="#9c9c9c"/><circle cx="7.5" cy="0" r="3.500" fill="#f0f0f0"/><circle cx="7.5" cy="0" r="1.900" fill="#8c8c8c"/></g>
<g id="eyeoff"><path d="M-.5 0Q7.5 -8.600 15.500 0Q7.5 8.600 -.5 0Z" fill="none" stroke="#aaa" stroke-width="1"/><circle cx="7.5" cy="0" r="2.8" fill="none" stroke="#aaa" stroke-width="1"/><path d="M2 -5L13 5" stroke="#aaa" stroke-width="1"/></g>
<g id="folder"><path d="M0 2.5H5.5L7 0.5H0Z" fill="#8f8f8f"/><rect x="0" y="3" width="16" height="11" fill="#8f8f8f"/></g>
<g id="tri"><path d="M0 0L7.5 6L0 12Z" fill="#fff" stroke="#222" stroke-width="1.1" stroke-linejoin="round"/></g>
<linearGradient id="trg" x1="0" y1="0" x2="1" y2="0"><stop offset=".2" stop-color="#d8d8d8"/><stop offset="1" stop-color="#3a3a3a"/></linearGradient><g id="trix"><path d="M0 11H10.500V0.500Z" fill="url(#trg)" stroke="#222" stroke-width="1" stroke-linejoin="round"/></g>
</defs>
<use href="#trix" x="22" y="186"/>
<use href="#eye" x="50" y="192"/>
<path d="M75.500 188.200Q75.500 187.600 76.200 187L78.300 185.400Q78.800 185 79.500 185H89Q90.200 185 90.200 186V194.500L86.500 198Q86 198.500 85.300 198.500H76.500Q75.500 198.500 75.500 197.500Z" fill="#e9e9f0" stroke="#333" stroke-width=".9"/><path d="M75.800 187.800H86.200V198.200M86.200 187.800L90 185.200" fill="none" stroke="#555" stroke-width=".7"/><path d="M76.200 187.500L79.200 185.300H89.600L86.200 187.500Z" fill="#fafafa"/><circle cx="180" cy="192" r="5.8" fill="#fff" stroke="#222" stroke-width="1.1"/><circle cx="180" cy="192" r="2.4" fill="#222"/>
<use href="#tri" x="41.5" y="210"/><use href="#tri" x="41.5" y="234"/><use href="#tri" x="41.5" y="258"/><use href="#tri" x="41.5" y="282"/>
<use href="#trix" x="40" y="306"/>
<!-- gear -->
<g transform="translate(70,216)" fill="#8f8f8f"><circle r="5.6"/><g id="teeth"><rect x="-1.7" y="-8.2" width="3.4" height="16.4"/><rect x="-1.7" y="-8.2" width="3.4" height="16.4" transform="rotate(45)"/><rect x="-1.7" y="-8.2" width="3.4" height="16.4" transform="rotate(90)"/><rect x="-1.7" y="-8.2" width="3.4" height="16.4" transform="rotate(135)"/></g><circle r="2.5" fill="#f0f0f0"/></g>
<use href="#folder" x="62" y="233"/>
<use href="#eyeoff" x="62" y="264"/><use href="#folder" x="87" y="257"/>
<use href="#eye" x="62" y="288"/><use href="#folder" x="87" y="281"/>
<path d="M84.5 296L87.7 293M89.8 296L93.0 293M95.2 296L98.4 293M100.5 296L103.8 293M105.9 296L109.1 293M111.2 296L114.5 293M116.6 296L119.8 293M121.9 296L125.1 293M127.3 296L130.5 293M132.7 296L135.8 293M138.0 296L141.2 293M143.3 296L146.5 293M148.7 296L151.9 293M154.1 296L157.2 293" stroke="#5f7fb3" stroke-width="1.9" opacity=".9"/>
<use href="#eye" x="62" y="312"/><use href="#folder" x="87" y="305"/>
<use href="#eyeoff" x="80" y="336"/>
<rect x="106.5" y="329.5" width="12.5" height="12.5" fill="none" stroke="#444" stroke-width=".9" stroke-dasharray="6 2"/>
<g fill="#444"><rect x="105" y="328" width="2.5" height="2.5"/><rect x="118" y="328" width="2.5" height="2.5"/><rect x="105" y="341" width="2.5" height="2.5"/></g>
<rect x="114.500" y="339" width="7" height="5" fill="#f2a0a0" stroke="#d42a2a" stroke-width="1.1"/><path d="M116.200 339V337.200Q118 335 119.800 337.200V339" fill="none" stroke="#d42a2a" stroke-width="1.1"/>
</svg>
<!-- UNSAVED BAR -->
<div class="abs" style="left:469px;top:152px;width:265px;height:24px;background:#f0f0f0"></div>
<svg class="abs" style="left:471px;top:155px" width="20" height="18" viewBox="0 0 20 18"><path d="M9.5 1.5L18 16H1Z" fill="#f7a21b" stroke="#f7a21b" stroke-width="1.5" stroke-linejoin="round"/><rect x="8.6" y="6" width="1.9" height="5.5" fill="#fff"/><rect x="8.6" y="12.6" width="1.9" height="1.9" fill="#fff"/></svg>
<div class="abs" style="left:494.5px;top:157.5px;font-size:10.7px;font-weight:bold;color:#333">Unsaved:</div>
<div class="abs" style="left:564px;top:157.5px;font-size:10.7px;color:#333">Changes may be lost</div>
<div class="abs" style="left:684px;top:153px;width:1px;height:22px;background:#d0d0d0"></div>
<div class="abs" style="left:697.5px;top:157.5px;font-size:10.7px;color:#1772b8">Save</div>
<!-- FLOATING INPUT -->
<div class="abs" style="left:522.5px;top:368.5px;width:106px;height:21px;background:#f0f0f0"></div>
<div class="abs" style="left:535px;top:369.5px;width:70px;height:19px;background:#fff;border:1px solid #c9c9c9"></div>
<div class="abs" style="left:548.5px;top:373px;width:41.5px;height:13px;background:#1168c9"></div>
<div class="abs" style="left:549.5px;top:373px;font-size:10.7px;color:#fff;white-space:nowrap">315 mm</div>
<svg class="abs" style="left:522px;top:368px" width="108" height="22" viewBox="522 368 108 22"><g fill="#cfcfcf"><circle cx="526" cy="373" r=".8"/><circle cx="529" cy="375" r=".8"/><circle cx="526" cy="377" r=".8"/><circle cx="529" cy="379" r=".8"/><circle cx="526" cy="381" r=".8"/><circle cx="529" cy="383" r=".8"/><circle cx="526" cy="385" r=".8"/></g><g fill="#666"><circle cx="617.3" cy="374.3" r="1.3"/><circle cx="617.3" cy="379" r="1.3"/><circle cx="617.3" cy="383.7" r="1.3"/></g></svg>
<!-- VIEWCUBE -->
<svg class="abs" style="left:1085px;top:165px" width="112" height="107" viewBox="1085 165 112 107">
<defs><radialGradient id="vsh"><stop offset="0" stop-color="#000" stop-opacity=".3"/><stop offset=".6" stop-color="#000" stop-opacity=".1"/><stop offset="1" stop-color="#000" stop-opacity="0"/></radialGradient>
<linearGradient id="vf" x1="0" y1="0" x2="0" y2="1"><stop offset="0" stop-color="#f1f1f1"/><stop offset="1" stop-color="#e2e2e2"/></linearGradient></defs>
<ellipse cx="1146" cy="245" rx="42" ry="16" fill="url(#vsh)" transform="rotate(10 1146 245)"/>
<path d="M1103.200 194.300L1128.900 177.100L1169.300 186.200L1148.600 206.400Z" fill="#f2f2f2"/>
<path d="M1103.200 194.300L1148.600 206.400L1147.100 249.800L1105.700 236.200Z" fill="url(#vf)"/>
<path d="M1148.600 206.400L1169.300 186.200L1167.300 230.700L1147.100 249.800Z" fill="#e7e7e7"/>
<path d="M1103.200 194.300L1128.900 177.100L1169.300 186.200M1103.200 194.300L1148.600 206.400L1169.300 186.200M1148.600 206.400L1147.100 249.800" fill="none" stroke="#9a9a9a" stroke-width=".9" stroke-dasharray="5 3" opacity=".8"/>
<path d="M1169.300 186.200L1167.300 230.700" stroke="#c4c4c4" stroke-width=".8"/>
<path d="M1139.500 203.500L1144 199.500L1152.700 201.700L1152.400 213L1148.400 214.800L1139.700 212Z" fill="#e4e6ee" opacity=".9"/>
<text transform="matrix(.96 .26 0 1.05 1110.500 222.5)" font-family="Liberation Sans, sans-serif" font-size="9" font-weight="bold" fill="#a4a7ad" letter-spacing=".5">FRONT</text>
<text transform="matrix(.82 .19 -.8 .5 1126.500 188.5)" font-family="Liberation Sans, sans-serif" font-size="9.500" font-weight="bold" fill="#b4b6ba">TOP</text>
<text transform="matrix(.5 -.58 0 1.05 1152.500 227)" font-family="Liberation Sans, sans-serif" font-size="8.5" font-weight="bold" fill="#a8aaae">RIGHT</text>
<path d="M1101.200 187.700L1105.700 236.200" stroke="#5b5bf0" stroke-width="2.300"/>
<path d="M1105.700 237.200L1154.700 254.400" stroke="#f2a3a3" stroke-width="2.300"/>
<text x="1095.500" y="184.200" font-family="Liberation Sans, sans-serif" font-size="14" font-weight="bold" fill="#8585ff">Z</text>
<text x="1157.500" y="262" font-family="Liberation Sans, sans-serif" font-size="14" font-weight="bold" fill="#ff8d8d">X</text>
</svg>
<!-- EDIT FEATURE -->
<div class="abs" style="left:897px;top:272px;width:300px;height:153px;background:#f2f2f2;border:1px solid #c6c6c6"></div>
<div class="abs" style="left:898px;top:296px;width:298px;height:1px;background:#d0d0d0"></div>
<div class="abs" style="left:898px;top:388px;width:298px;height:1px;background:#d0d0d0"></div>
<div class="abs" style="left:922.5px;top:277.5px;font-size:10.7px;color:#444">EDIT FEATURE</div>
<div class="abs" style="left:910px;top:305.5px;font-size:10.7px;color:#222">Plane</div>
<div class="abs" style="left:910px;top:335.5px;font-size:10.7px;color:#222">Extent</div>
<div class="abs" style="left:910px;top:365.5px;font-size:10.7px;color:#222">Distance</div>
<div class="abs" style="left:965px;top:298.5px;width:77.5px;height:27.2px;background:#0a96d8;border-radius:2px"></div>
<div class="abs" style="left:987.5px;top:305.5px;font-size:10.7px;color:#fff;white-space:nowrap">1 selected</div>
<div class="abs" style="left:965.5px;top:329px;width:198.5px;height:26px;background:#fff;border:1px solid #d0d0d0;border-radius:2px"></div>
<div class="abs" style="left:989.5px;top:335.5px;font-size:10.7px;color:#222">Distance</div>
<div class="abs" style="left:965.5px;top:359.5px;width:198.5px;height:25px;background:#fff;border:1px solid #d0d0d0"></div>
<div class="abs" style="left:969.5px;top:365.5px;font-size:10.7px;color:#222">315 mm</div>
<div class="abs" style="left:1055px;top:397px;width:60px;height:18.5px;background:#e3e3e3;border:1px solid #b0b0b0;font-size:12px;color:#484848;text-align:center;line-height:17.5px">OK</div>
<div class="abs" style="left:1125px;top:397px;width:60px;height:18.5px;background:#e3e3e3;border:1px solid #b0b0b0;font-size:12px;color:#484848;text-align:center;line-height:17.5px">Cancel</div>
<svg class="abs" style="left:897px;top:272px" width="300" height="153" viewBox="897 272 300 153">
<path d="M900.5 278V291" stroke="#555" stroke-width="1"/><path d="M898.5 280V289" stroke="#999" stroke-width="1"/>
<circle cx="913.5" cy="284.3" r="4.6" fill="#222"/><rect x="910.8" y="283.6" width="5.4" height="1.5" fill="#f2f2f2"/>
<path d="M1183 281L1187.5 284.5L1183 288ZM1188 281L1192.5 284.5L1188 288Z" fill="#222"/>
<path d="M973 304.5V317L976 314.5L978.2 319.6L980.2 318.7L978 313.7L982 313.5Z" fill="#fff" stroke="#222" stroke-width=".9" stroke-linejoin="round"/>
<path d="M1054 308L1062 316M1062 308L1054 316" stroke="#333" stroke-width="1.7"/>
<path d="M969.8 335V349.5M984.2 335V349.5" stroke="#0f2250" stroke-width="1.5"/><path d="M972 342.2H982" stroke="#222" stroke-width="1"/><path d="M971 342.2L974.5 340V344.4ZM983 342.2L979.5 340V344.4Z" fill="#222"/>
<path d="M1152.3 340.5H1158.7L1155.5 344.5Z" fill="#222"/>
<circle cx="912" cy="407" r="5.6" fill="#111"/><rect x="911.1" y="405.8" width="1.9" height="4.2" fill="#fff"/><rect x="911.1" y="403.2" width="1.9" height="1.7" fill="#fff"/>
</svg>
<!-- TOOLTIP -->
<div class="abs" style="left:737px;top:637px;width:245px;height:16.6px;background:#f1f1f1;border:1px solid #767676"></div>
<div class="abs" id="tip" style="left:741px;top:636.5px;font-family:'Liberation Serif',serif;font-size:15px;color:#000;white-space:nowrap;letter-spacing:-.33px">Select plane, planar face or sketch profile</div>
<!-- COMMENTS -->
<div class="abs panelhdr" style="left:5px;top:960px;width:300px;height:25px;border-top-color:#e6e6e6"></div>
<div class="abs" style="left:30px;top:965.5px;font-size:10.7px;color:#444">COMMENTS</div>
<svg class="abs" style="left:280px;top:962px" width="25" height="20" viewBox="280 962 25 20"><circle cx="288.5" cy="972.3" r="4.6" fill="#222"/><rect x="285.8" y="971.6" width="5.4" height="1.4" fill="#f1f1f1"/><rect x="287.8" y="969.6" width="1.4" height="5.4" fill="#f1f1f1"/><path d="M300.5 967V978" stroke="#555" stroke-width="1"/><path d="M302.5 969.2V975.8" stroke="#888" stroke-width="1"/></svg>
<!-- NAVBAR -->
<div class="abs" style="left:498px;top:961px;width:237px;height:23px;background:#f0f0f0"></div>
<svg class="abs" style="left:498px;top:961px" width="237" height="23" viewBox="498 961 237 23">
<!-- orbit -->
<g stroke="#333" fill="none" stroke-width="1.1"><ellipse cx="509" cy="972.5" rx="6.5" ry="2.6"/><path d="M509 965.5V980"/><path d="M506.5 968L509 965L511.5 968" /><path d="M513.5 970.5L516.5 972.5L513.5 974.8"/></g>
<path d="M521.5 971H527.5L524.5 974.5Z" fill="#222"/>
<!-- look at -->
<rect x="535.5" y="969.5" width="13" height="9.5" fill="none" stroke="#333" stroke-width="1.2"/><rect x="538" y="972.5" width="8" height="3.5" fill="none" stroke="#333" stroke-width="1"/><path d="M537.5 969L540 965.5M541.5 969L544 965.5M545.5 969L547.5 966" stroke="#333" stroke-width="1"/>
<!-- pan hand -->
<path d="M563.5 979.5Q560.5 976 559.5 973Q560.5 971.5 562.5 973.5V967.5Q563.5 966 564.5 967.5V966Q565.7 964.6 566.8 966V966.5Q568 965.3 569 966.8V968.5Q570.3 967.5 571.2 969V975Q571 978 569.5 979.5Z" fill="#fff" stroke="#333" stroke-width="1"/><path d="M564.5 967.5V972M566.8 966.5V972M569 968V972.3" stroke="#333" stroke-width=".8"/>
<!-- zoom -->
<circle cx="591.5" cy="971.5" r="4.6" fill="#f8f8f8" stroke="#333" stroke-width="1.3"/><path d="M595 975L599.5 979.5" stroke="#333" stroke-width="2"/><path d="M597 967.5H601.5M599.2 965.3V969.7M597 971.8H601.5" stroke="#333" stroke-width="1"/>
<!-- zoom window -->
<circle cx="619" cy="971.5" r="5" fill="#f8f8f8" stroke="#333" stroke-width="1.3"/><rect x="616.3" y="969" width="5.4" height="5" fill="#ddd" stroke="#555" stroke-width=".7"/><path d="M623 975.5L627 979.5" stroke="#333" stroke-width="2.2"/>
<path d="M632.5 971H638.5L635.5 974.5Z" fill="#222"/>
<!-- display -->
<rect x="646.5" y="966" width="14" height="10" fill="#5a87c9" stroke="#2b3e66" stroke-width="1.2"/><rect x="648.5" y="968" width="10" height="6" fill="#8db4e6"/><path d="M651.5 976.5V979H655.5V976.5M649.5 979.5H657.5" stroke="#2b3e66" stroke-width="1.2" fill="none"/>
<path d="M662.5 971H668.5L665.5 974.5Z" fill="#222"/>
<!-- grid -->
<rect x="677.5" y="965.5" width="14" height="14" fill="#e8e8e8" stroke="#444" stroke-width="1"/><path d="M680.3 965.5V979.5M683.1 965.5V979.5M685.9 965.5V979.5M688.7 965.5V979.5M677.5 968.3H691.5M677.5 971.1H691.5M677.5 973.9H691.5M677.5 976.7H691.5" stroke="#444" stroke-width=".8"/>
<path d="M694 971H700L697 974.5Z" fill="#222"/>
<!-- viewports -->
<g fill="#7aa7e0" stroke="#2b3e66" stroke-width="1"><rect x="708.5" y="966.5" width="6" height="5"/><rect x="715.5" y="966.5" width="6" height="5"/><rect x="708.5" y="972.8" width="6" height="5"/><rect x="715.5" y="972.8" width="6" height="5"/></g>
<path d="M724.5 971H730.5L727.5 974.5Z" fill="#222"/>
</svg>
<div class="abs" style="left:1018.5px;top:965.8px;font-size:10.9px;font-weight:bold;color:#333;white-space:nowrap">1 Face | Area : 90792.028 mm^2</div>

<div id="bottombar" class="abs"></div>
<svg class="abs" style="left:0;top:989px" width="1202" height="49" viewBox="0 989 1202 49">
<!-- playback -->
<g fill="#48484a">
<rect x="11.6" y="1006.9" width="2.4" height="14"/><path d="M14.600 1014L23.900 1007.500V1020.500Z"/>
<path d="M36.300 1014L45.800 1007.500V1020.500Z"/><rect x="47.200" y="1011" width="1.800" height="6"/>
<path d="M62.300 1006.300L73.600 1014L62.300 1021.700Z"/>
<rect x="86.200" y="1011" width="1.800" height="6"/><path d="M89.100 1007.500L98.800 1014L89.100 1020.500Z"/>
<path d="M112 1007.500L121.700 1014L112 1020.500Z"/><rect x="122" y="1006.900" width="2.400" height="14"/>
</g>
<!-- group bar -->
<rect x="145" y="997" width="68" height="5.8" fill="#6bfce0"/>
<path d="M171 1001L175 996.5M176 1001L180 996.5M181 1001L185 996.5" stroke="#333" stroke-width="1.5"/>
<!-- track -->
<path d="M155.5 1025V1029.5H323.5V1025M179.5 1025V1029.5M203.5 1025V1029.5M227.5 1025V1029.5M251.5 1025V1029.5M275.5 1025V1029.5M299.5 1025V1029.5" fill="none" stroke="#c9c9c9" stroke-width="1.8"/>
<!-- sketch icon -->
<rect x="148.5" y="1006.5" width="12" height="12" fill="none" stroke="#333" stroke-width="1" stroke-dasharray="7 2.5"/>
<g fill="#1f7fe0"><rect x="147" y="1005" width="2.6" height="2.6"/><rect x="159.4" y="1005" width="2.6" height="2.6"/><rect x="147" y="1017.4" width="2.6" height="2.6"/></g>
<path d="M156 1019L161.5 1013.5L163.5 1015.5L158 1021L155.3 1021.6Z" fill="#f2a23a" stroke="#e5702a" stroke-width=".6"/>
<!-- extrude icon -->
<path d="M171 1009L174 1006H184V1017.5L181 1020.5H171Z" fill="#3f8fd8" stroke="#2a6fb5" stroke-width=".8"/>
<path d="M171 1009H181V1020.5M181 1009L184 1006" fill="none" stroke="#2a6fb5" stroke-width=".7"/><path d="M171 1009L174 1006H184L181 1009Z" fill="#8cc4f1"/>
<path d="M186.5 1019.5V1007" stroke="#222" stroke-width="1"/><path d="M184.7 1008L186.5 1004.5L188.3 1008Z" fill="#222"/>
<!-- plane icon -->
<path d="M194.5 1009L198 1005.5V1016.5L194.5 1020.5Z" fill="#e8e8e8" stroke="#666" stroke-width=".8"/>
<path d="M198.5 1009.5L204 1004.5V1016L198.5 1021Z" fill="#5cbf7c" stroke="#3da060" stroke-width=".6"/>
<path d="M194.5 1009H198.5V1021H194.5Z" fill="#dcdcdc" stroke="#666" stroke-width=".7"/>
<path d="M206 1009.5L211.5 1004.5V1016L206 1021Z" fill="#e9996a" stroke="#d0804f" stroke-width=".6"/>
<!-- marker -->
<path d="M209.5 998.5H220.5V1001.5L215 1007L209.5 1001.5Z" fill="#5a5a5a"/>
<path d="M215 1002V1031" stroke="#333" stroke-width="1.6"/>
<!-- faded icons -->
<g opacity=".26">
<rect x="220.500" y="1006.5" width="12" height="12" fill="none" stroke="#2a4fa0" stroke-width="1" stroke-dasharray="6 2"/>
<path d="M228 1019L233.500 1013.5L235.500 1015.5L230 1021L227.300 1021.6Z" fill="#f2a23a" stroke="#e5702a" stroke-width=".6"/>
<path d="M243.5 1006.500H259V1014L255 1020H247.500L243.500 1014Z" fill="#6f9fd6" stroke="#4a7cb8" stroke-width=".7"/><circle cx="251.5" cy="1018.500" r="3.6" fill="#f4f4f4" stroke="#888" stroke-width=".8"/>
<path d="M267 1009L270 1006H280V1017.500L277 1020.5H267Z" fill="#6f9fd6" stroke="#4a7cb8" stroke-width=".8"/><path d="M282.500 1019.500V1006" stroke="#444" stroke-width="1"/>
<path d="M291.500 1020.500L298 1005.500V1020.500Z" fill="#8fb2dc" stroke="#557" stroke-width=".7"/><path d="M299.500 1005.500V1020.500H306Z" fill="#e8e8e8" stroke="#777" stroke-width=".7"/>
<rect x="315.500" y="1005.500" width="15" height="15" rx="2" fill="#ddd" stroke="#777" stroke-width=".9"/><path d="M319 1011V1017.500H326" fill="none" stroke="#5a8fd0" stroke-width="2.6"/>
</g>
<!-- gear -->
<g transform="translate(1179.7,1013.800)" fill="#8a8a8a"><circle r="5.8"/><rect x="-1.800" y="-8.500" width="3.600" height="17"/><rect x="-1.800" y="-8.500" width="3.600" height="17" transform="rotate(45)"/><rect x="-1.800" y="-8.500" width="3.600" height="17" transform="rotate(90)"/><rect x="-1.800" y="-8.500" width="3.600" height="17" transform="rotate(135)"/><circle r="2.700" fill="#f1f1f1"/></g>
</svg>

<div class="abs lb"></div><div class="abs rb"></div><div class="abs bb"></div>
</body></html>
